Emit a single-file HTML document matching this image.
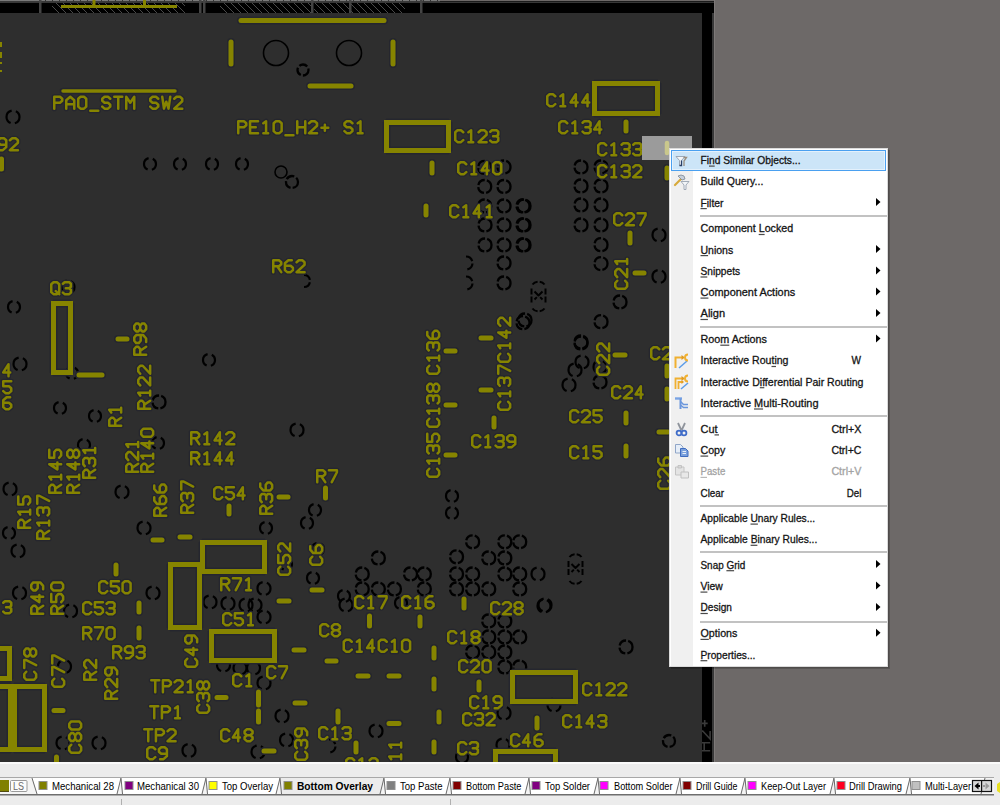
<!DOCTYPE html><html><head><meta charset="utf-8"><style>
*{margin:0;padding:0;box-sizing:border-box}
html,body{width:1000px;height:805px;overflow:hidden;background:#6d6968;font-family:"Liberation Sans",sans-serif}
#top{position:absolute;left:0;top:0;width:712px;height:13px;background:#000}
#board{position:absolute;left:0;top:13px;width:702px;height:749px;background:#2e2e2e}
#frameR{position:absolute;left:702px;top:0;width:10px;height:762px;background:#000}
#frameR2{position:absolute;left:712px;top:0;width:2px;height:762px;background:#383838}
#hlpad{position:absolute;left:642px;top:136px;width:50px;height:24px;background:#9b9b9b}
#menu{position:absolute;left:669px;top:148px;width:219px;height:519px;background:#fff;border:1px solid #c8c8c8;box-shadow:2px 2px 3px rgba(0,0,0,0.35)}
#menu .gutter{position:absolute;left:1px;top:1px;width:23px;bottom:1px;background:#f1f1f1}
#menu .hl{position:absolute;left:1px;width:215px;height:21px;background:#cce4f7;border:1px solid #5aa6f0}
#menu .sep{position:absolute;left:30px;right:0;height:2px;border-top:1px solid #d4d4d4;border-bottom:1px solid #fff}
#menu .mi{position:absolute;left:0;width:217px;height:21px;font-size:11.4px;line-height:13px;color:#000;letter-spacing:-0.2px}
#menu .mi .tx{position:absolute;left:30px;top:1px;white-space:pre}
#menu .mi .sc{position:absolute;right:25px;top:1px;white-space:pre}
#menu .mi.dis{color:#a0a0a0}
#menu .mi .ar{position:absolute;left:206px;top:3px;width:0;height:0;border-left:4px solid #000;border-top:4px solid transparent;border-bottom:4px solid transparent}
#menu u{text-decoration:underline;text-underline-offset:1px}
#bottom{position:absolute;left:0;top:762px;width:1000px;height:43px;background:#ececec}
</style></head><body>
<div id="board"></div>
<svg width="702" height="749" viewBox="0 13 702 749" style="position:absolute;left:0;top:13px">
<g fill="none" stroke="#000" stroke-width="2">
<circle cx="276.0" cy="53.0" r="12.5" stroke-width="1.6"/>
<circle cx="349.0" cy="53.0" r="12.5" stroke-width="1.6"/>
<circle cx="303.0" cy="70.0" r="5.5" stroke-width="2.3" stroke-dasharray="8.5 2.2"/>
<circle cx="150" cy="164" r="6" stroke-width="2.2" stroke-dasharray="7.22 4.4 14.45 4.4 7.22"/>
<circle cx="180" cy="164" r="6" stroke-width="2.2" stroke-dasharray="7.22 4.4 14.45 4.4 7.22"/>
<circle cx="212" cy="164" r="6" stroke-width="2.2" stroke-dasharray="7.22 4.4 14.45 4.4 7.22"/>
<circle cx="242" cy="164" r="6" stroke-width="2.2" stroke-dasharray="7.22 4.4 14.45 4.4 7.22"/>
<circle cx="281" cy="172" r="6" stroke-width="1.6"/>
<circle cx="292" cy="182" r="6" stroke-width="2.3" stroke-dasharray="8.5 2.2"/>
<circle cx="484.7" cy="167.4" r="6.5" stroke-width="2.3" stroke-dasharray="8.5 2.2"/>
<circle cx="504.0" cy="167.0" r="6.5" stroke-width="2.3" stroke-dasharray="8.5 2.2"/>
<circle cx="484.7" cy="186.5" r="6.5" stroke-width="2.3" stroke-dasharray="8.5 2.2"/>
<circle cx="504.0" cy="186.5" r="6.5" stroke-width="2.3" stroke-dasharray="8.5 2.2"/>
<circle cx="484.7" cy="206.0" r="6.5" stroke-width="2.3" stroke-dasharray="8.5 2.2"/>
<circle cx="504.0" cy="206.0" r="6.5" stroke-width="2.3" stroke-dasharray="8.5 2.2"/>
<circle cx="523.0" cy="206.0" r="6.5" stroke-width="2.3" stroke-dasharray="8.5 2.2"/>
<circle cx="485.0" cy="225.0" r="6.5" stroke-width="2.3" stroke-dasharray="8.5 2.2"/>
<circle cx="504.0" cy="225.0" r="6.5" stroke-width="2.3" stroke-dasharray="8.5 2.2"/>
<circle cx="523.0" cy="225.0" r="6.5" stroke-width="2.3" stroke-dasharray="8.5 2.2"/>
<circle cx="485.0" cy="245.0" r="6.5" stroke-width="2.3" stroke-dasharray="8.5 2.2"/>
<circle cx="504.0" cy="245.0" r="6.5" stroke-width="2.3" stroke-dasharray="8.5 2.2"/>
<circle cx="523.0" cy="245.0" r="6.5" stroke-width="2.3" stroke-dasharray="8.5 2.2"/>
<path d="M466,256.5 A6.5,6.5 0 0 1 466,269.5" stroke-width="2.2" stroke-dasharray="8 2.5"/>
<circle cx="504.0" cy="263.0" r="6.5" stroke-width="2.3" stroke-dasharray="8.5 2.2"/>
<path d="M466,276.5 A6.5,6.5 0 0 1 466,289.5" stroke-width="2.2" stroke-dasharray="8 2.5"/>
<circle cx="504.0" cy="283.0" r="6.5" stroke-width="2.3" stroke-dasharray="8.5 2.2"/>
<circle cx="523.0" cy="322.7" r="6.5" stroke-width="2.3" stroke-dasharray="8.5 2.2"/>
<circle cx="581.0" cy="167.0" r="6.5" stroke-width="2.3" stroke-dasharray="8.5 2.2"/>
<circle cx="601.0" cy="167.0" r="6.5" stroke-width="2.3" stroke-dasharray="8.5 2.2"/>
<circle cx="581.0" cy="186.0" r="6.5" stroke-width="2.3" stroke-dasharray="8.5 2.2"/>
<circle cx="601.0" cy="186.0" r="6.5" stroke-width="2.3" stroke-dasharray="8.5 2.2"/>
<circle cx="581.0" cy="205.0" r="6.5" stroke-width="2.3" stroke-dasharray="8.5 2.2"/>
<circle cx="601.0" cy="205.0" r="6.5" stroke-width="2.3" stroke-dasharray="8.5 2.2"/>
<circle cx="581.0" cy="225.0" r="6.5" stroke-width="2.3" stroke-dasharray="8.5 2.2"/>
<circle cx="601.0" cy="225.0" r="6.5" stroke-width="2.3" stroke-dasharray="8.5 2.2"/>
<circle cx="601.0" cy="244.7" r="6.5" stroke-width="2.3" stroke-dasharray="8.5 2.2"/>
<circle cx="601.0" cy="263.6" r="6.5" stroke-width="2.3" stroke-dasharray="8.5 2.2"/>
<circle cx="620.0" cy="302.0" r="6.5" stroke-width="2.3" stroke-dasharray="8.5 2.2"/>
<circle cx="601.0" cy="321.7" r="6.5" stroke-width="2.3" stroke-dasharray="8.5 2.2"/>
<circle cx="581.0" cy="343.0" r="6.5" stroke-width="2.3" stroke-dasharray="8.5 2.2"/>
<circle cx="524.0" cy="206.0" r="6.5" stroke-width="2.3" stroke-dasharray="8.5 2.2"/>
<circle cx="524.0" cy="225.0" r="6.5" stroke-width="2.3" stroke-dasharray="8.5 2.2"/>
<circle cx="524.0" cy="245.0" r="6.5" stroke-width="2.3" stroke-dasharray="8.5 2.2"/>
<circle cx="525.0" cy="320.0" r="6.5" stroke-width="2.3" stroke-dasharray="8.5 2.2"/>
<circle cx="659.0" cy="235.0" r="6.5" stroke-width="2.2" stroke-dasharray="8.01 4.4 16.02 4.4 8.01"/>
<circle cx="659.0" cy="276.5" r="6.5" stroke-width="2.2" stroke-dasharray="8.01 4.4 16.02 4.4 8.01"/>
<circle cx="472.6" cy="541.8" r="6.5" stroke-width="2.3" stroke-dasharray="8.5 2.2"/>
<circle cx="504.8" cy="541.8" r="6.5" stroke-width="2.3" stroke-dasharray="8.5 2.2"/>
<circle cx="519.7" cy="541.8" r="6.5" stroke-width="2.3" stroke-dasharray="8.5 2.2"/>
<circle cx="378.3" cy="558.0" r="6.5" stroke-width="2.3" stroke-dasharray="8.5 2.2"/>
<circle cx="456.5" cy="556.8" r="6.5" stroke-width="2.3" stroke-dasharray="8.5 2.2"/>
<circle cx="488.7" cy="558.0" r="6.5" stroke-width="2.3" stroke-dasharray="8.5 2.2"/>
<circle cx="504.8" cy="558.0" r="6.5" stroke-width="2.3" stroke-dasharray="8.5 2.2"/>
<circle cx="362.2" cy="574.0" r="6.5" stroke-width="2.3" stroke-dasharray="8.5 2.2"/>
<circle cx="410.5" cy="574.0" r="6.5" stroke-width="2.3" stroke-dasharray="8.5 2.2"/>
<circle cx="424.3" cy="574.0" r="6.5" stroke-width="2.3" stroke-dasharray="8.5 2.2"/>
<circle cx="456.5" cy="574.0" r="6.5" stroke-width="2.3" stroke-dasharray="8.5 2.2"/>
<circle cx="472.6" cy="574.0" r="6.5" stroke-width="2.3" stroke-dasharray="8.5 2.2"/>
<circle cx="504.8" cy="574.0" r="6.5" stroke-width="2.3" stroke-dasharray="8.5 2.2"/>
<circle cx="519.7" cy="574.0" r="6.5" stroke-width="2.3" stroke-dasharray="8.5 2.2"/>
<circle cx="362.2" cy="589.0" r="6.5" stroke-width="2.3" stroke-dasharray="8.5 2.2"/>
<circle cx="378.3" cy="589.0" r="6.5" stroke-width="2.3" stroke-dasharray="8.5 2.2"/>
<circle cx="394.4" cy="589.0" r="6.5" stroke-width="2.3" stroke-dasharray="8.5 2.2"/>
<circle cx="424.3" cy="589.0" r="6.5" stroke-width="2.3" stroke-dasharray="8.5 2.2"/>
<circle cx="456.5" cy="589.0" r="6.5" stroke-width="2.3" stroke-dasharray="8.5 2.2"/>
<circle cx="472.6" cy="589.0" r="6.5" stroke-width="2.3" stroke-dasharray="8.5 2.2"/>
<circle cx="488.7" cy="589.0" r="6.5" stroke-width="2.3" stroke-dasharray="8.5 2.2"/>
<circle cx="519.7" cy="589.0" r="6.5" stroke-width="2.3" stroke-dasharray="8.5 2.2"/>
<circle cx="346.0" cy="605.0" r="6.5" stroke-width="2.2" stroke-dasharray="8.01 4.4 16.02 4.4 8.01"/>
<circle cx="488.7" cy="621.0" r="6.5" stroke-width="2.3" stroke-dasharray="8.5 2.2"/>
<circle cx="504.8" cy="621.0" r="6.5" stroke-width="2.3" stroke-dasharray="8.5 2.2"/>
<circle cx="488.7" cy="637.0" r="6.5" stroke-width="2.3" stroke-dasharray="8.5 2.2"/>
<circle cx="504.8" cy="637.0" r="6.5" stroke-width="2.3" stroke-dasharray="8.5 2.2"/>
<circle cx="519.7" cy="637.0" r="6.5" stroke-width="2.3" stroke-dasharray="8.5 2.2"/>
<circle cx="472.6" cy="652.0" r="6.5" stroke-width="2.3" stroke-dasharray="8.5 2.2"/>
<circle cx="488.7" cy="652.0" r="6.5" stroke-width="2.3" stroke-dasharray="8.5 2.2"/>
<circle cx="504.8" cy="652.0" r="6.5" stroke-width="2.3" stroke-dasharray="8.5 2.2"/>
<circle cx="504.8" cy="667.0" r="6.5" stroke-width="2.3" stroke-dasharray="8.5 2.2"/>
<circle cx="519.7" cy="667.0" r="6.5" stroke-width="2.3" stroke-dasharray="8.5 2.2"/>
<circle cx="544.0" cy="606.0" r="6.5" stroke-width="2.2" stroke-dasharray="8.01 4.4 16.02 4.4 8.01"/>
<circle cx="626.0" cy="647.0" r="6.5" stroke-width="2.3" stroke-dasharray="8.5 2.2"/>
<circle cx="581.0" cy="342.0" r="6.5" stroke-width="2.3" stroke-dasharray="8.5 2.2"/>
<circle cx="582.0" cy="362.0" r="6.5" stroke-width="2.2" stroke-dasharray="8.01 4.4 16.02 4.4 8.01"/>
<circle cx="575.0" cy="370.0" r="6.5" stroke-width="2.2" stroke-dasharray="8.01 4.4 16.02 4.4 8.01"/>
<circle cx="569.0" cy="385.0" r="6.5" stroke-width="2.2" stroke-dasharray="8.01 4.4 16.02 4.4 8.01"/>
<circle cx="600.0" cy="382.0" r="6.5" stroke-width="2.3" stroke-dasharray="8.5 2.2"/>
<circle cx="600.0" cy="367.0" r="6.5" stroke-width="2.2" stroke-dasharray="8.01 4.4 16.02 4.4 8.01"/>
<circle cx="538.0" cy="574.0" r="6.5" stroke-width="2.2" stroke-dasharray="8.01 4.4 16.02 4.4 8.01"/>
<circle cx="545.0" cy="605.0" r="6.5" stroke-width="2.2" stroke-dasharray="8.01 4.4 16.02 4.4 8.01"/>
<circle cx="554.0" cy="705.0" r="6.5" stroke-width="2.2" stroke-dasharray="8.01 4.4 16.02 4.4 8.01"/>
<circle cx="504.0" cy="713.0" r="6.5" stroke-width="2.2" stroke-dasharray="8.01 4.4 16.02 4.4 8.01"/>
<circle cx="462.0" cy="757.0" r="6.0" stroke-width="2.2" stroke-dasharray="7.22 4.4 14.45 4.4 7.22"/>
<circle cx="503.0" cy="745.0" r="6.5" stroke-width="2.2" stroke-dasharray="8.01 4.4 16.02 4.4 8.01"/>
<circle cx="14.0" cy="307.0" r="6.0" stroke-width="2.2" stroke-dasharray="7.22 4.4 14.45 4.4 7.22"/>
<circle cx="20" cy="364" r="6.5" stroke-width="2.2" stroke-dasharray="8.01 4.4 16.02 4.4 8.01"/>
<circle cx="68.0" cy="287.0" r="6.5" stroke-width="2.2" stroke-dasharray="8.01 4.4 16.02 4.4 8.01"/>
<circle cx="13.0" cy="117.0" r="6.5" stroke-width="2.2" stroke-dasharray="8.01 4.4 16.02 4.4 8.01"/>
<circle cx="159.0" cy="402.0" r="6.5" stroke-width="2.3" stroke-dasharray="8.5 2.2"/>
<circle cx="209.0" cy="360.0" r="6.0" stroke-width="2.2" stroke-dasharray="7.22 4.4 14.45 4.4 7.22"/>
<circle cx="297.0" cy="430.0" r="6.5" stroke-width="2.2" stroke-dasharray="8.01 4.4 16.02 4.4 8.01"/>
<path d="M304,275 A6,6 0 0 1 304,287" stroke-width="2.2" stroke-dasharray="8 2.5"/>
<circle cx="122.0" cy="492.0" r="6.5" stroke-width="2.2" stroke-dasharray="8.01 4.4 16.02 4.4 8.01"/>
<circle cx="72.0" cy="373.0" r="6.0" stroke-width="2.2" stroke-dasharray="7.22 4.4 14.45 4.4 7.22"/>
<circle cx="60.0" cy="408.0" r="6.0" stroke-width="2.2" stroke-dasharray="7.22 4.4 14.45 4.4 7.22"/>
<circle cx="95.0" cy="416.0" r="6.0" stroke-width="2.2" stroke-dasharray="7.22 4.4 14.45 4.4 7.22"/>
<circle cx="84.0" cy="445.0" r="6.0" stroke-width="2.2" stroke-dasharray="7.22 4.4 14.45 4.4 7.22"/>
<circle cx="158.0" cy="443.0" r="6.0" stroke-width="2.2" stroke-dasharray="7.22 4.4 14.45 4.4 7.22"/>
<circle cx="10.0" cy="489.0" r="6.5" stroke-width="2.2" stroke-dasharray="8.01 4.4 16.02 4.4 8.01"/>
<circle cx="144.0" cy="528.0" r="6.5" stroke-width="2.2" stroke-dasharray="8.01 4.4 16.02 4.4 8.01"/>
<circle cx="9.0" cy="533.0" r="6.0" stroke-width="2.2" stroke-dasharray="7.22 4.4 14.45 4.4 7.22"/>
<circle cx="266.0" cy="528.0" r="6.0" stroke-width="2.2" stroke-dasharray="7.22 4.4 14.45 4.4 7.22"/>
<circle cx="307.0" cy="523.0" r="6.0" stroke-width="2.2" stroke-dasharray="7.22 4.4 14.45 4.4 7.22"/>
<circle cx="318.0" cy="549.0" r="6.0" stroke-width="2.2" stroke-dasharray="7.22 4.4 14.45 4.4 7.22"/>
<circle cx="313.0" cy="578.0" r="6.0" stroke-width="2.2" stroke-dasharray="7.22 4.4 14.45 4.4 7.22"/>
<circle cx="315.0" cy="510.0" r="6.0" stroke-width="2.2" stroke-dasharray="7.22 4.4 14.45 4.4 7.22"/>
<circle cx="344.0" cy="596.0" r="6.0" stroke-width="2.2" stroke-dasharray="7.22 4.4 14.45 4.4 7.22"/>
<circle cx="452.0" cy="496.0" r="6.0" stroke-width="2.2" stroke-dasharray="7.22 4.4 14.45 4.4 7.22"/>
<circle cx="452.0" cy="513.0" r="6.0" stroke-width="2.2" stroke-dasharray="7.22 4.4 14.45 4.4 7.22"/>
<circle cx="376" cy="731" r="6.5" stroke-width="2.2" stroke-dasharray="8.01 4.4 16.02 4.4 8.01"/>
<path d="M329,739.5 A6.5,6.5 0 0 1 329,752.5" stroke-width="2.2" stroke-dasharray="8 2.5"/>
<circle cx="401.0" cy="603.0" r="6.0" stroke-width="2.2" stroke-dasharray="7.22 4.4 14.45 4.4 7.22"/>
<circle cx="669.0" cy="741.0" r="6.0" stroke-width="2.3" stroke-dasharray="8.5 2.2"/>
<circle cx="286.0" cy="564.0" r="6.0" stroke-width="2.2" stroke-dasharray="7.22 4.4 14.45 4.4 7.22"/>
<circle cx="210" cy="602" r="6.5" stroke-width="2.2" stroke-dasharray="8.01 4.4 16.02 4.4 8.01"/>
<circle cx="228" cy="603.5" r="6.5" stroke-width="2.2" stroke-dasharray="8.01 4.4 16.02 4.4 8.01"/>
<circle cx="246" cy="605" r="6.5" stroke-width="2.2" stroke-dasharray="8.01 4.4 16.02 4.4 8.01"/>
<circle cx="264" cy="588.5" r="6.5" stroke-width="2.2" stroke-dasharray="8.01 4.4 16.02 4.4 8.01"/>
<circle cx="255" cy="605" r="6.5" stroke-width="2.2" stroke-dasharray="8.01 4.4 16.02 4.4 8.01"/>
<circle cx="264" cy="617" r="6.5" stroke-width="2.2" stroke-dasharray="8.01 4.4 16.02 4.4 8.01"/>
<circle cx="223.5" cy="665" r="6.5" stroke-width="2.2" stroke-dasharray="8.01 4.4 16.02 4.4 8.01"/>
<circle cx="240" cy="668" r="6.5" stroke-width="2.2" stroke-dasharray="8.01 4.4 16.02 4.4 8.01"/>
<circle cx="253.5" cy="668" r="6.5" stroke-width="2.2" stroke-dasharray="8.01 4.4 16.02 4.4 8.01"/>
<circle cx="264" cy="683" r="6.5" stroke-width="2.2" stroke-dasharray="8.01 4.4 16.02 4.4 8.01"/>
<circle cx="282" cy="716" r="6.5" stroke-width="2.2" stroke-dasharray="8.01 4.4 16.02 4.4 8.01"/>
<circle cx="286.5" cy="740" r="6.5" stroke-width="2.2" stroke-dasharray="8.01 4.4 16.02 4.4 8.01"/>
<circle cx="99" cy="743" r="6.5" stroke-width="2.2" stroke-dasharray="8.01 4.4 16.02 4.4 8.01"/>
<circle cx="63" cy="743" r="6.5" stroke-width="2.2" stroke-dasharray="8.01 4.4 16.02 4.4 8.01"/>
<circle cx="153" cy="593" r="6.5" stroke-width="2.2" stroke-dasharray="8.01 4.4 16.02 4.4 8.01"/>
<circle cx="70.5" cy="611" r="6.5" stroke-width="2.2" stroke-dasharray="8.01 4.4 16.02 4.4 8.01"/>
<circle cx="18" cy="551" r="6.5" stroke-width="2.2" stroke-dasharray="8.01 4.4 16.02 4.4 8.01"/>
<circle cx="19.5" cy="593" r="6.5" stroke-width="2.2" stroke-dasharray="8.01 4.4 16.02 4.4 8.01"/>
<circle cx="64.5" cy="666.5" r="6.5" stroke-width="2.2" stroke-dasharray="8.01 4.4 16.02 4.4 8.01"/>
<circle cx="189" cy="750.5" r="6.5" stroke-width="2.2" stroke-dasharray="8.01 4.4 16.02 4.4 8.01"/>
<circle cx="258" cy="752" r="6.5" stroke-width="2.2" stroke-dasharray="8.01 4.4 16.02 4.4 8.01"/>
<path d="M569.5,557 A7,6 0 0 1 581.5,557 M569.5,581 A7,6 0 0 0 581.5,581 M568.5,561 L568.5,577 M582.5,561 L582.5,577 M571.5,564 L579.5,572 M579.5,564 L571.5,572" stroke-dasharray="6 2"/>
<path d="M532.5,284.5 A7,6 0 0 1 544.5,284.5 M532.5,308.5 A7,6 0 0 0 544.5,308.5 M531.5,288.5 L531.5,304.5 M545.5,288.5 L545.5,304.5 M534.5,291.5 L542.5,299.5 M542.5,291.5 L534.5,299.5" stroke-dasharray="6 2"/>
</g>
<g fill="none" stroke-linecap="round" stroke-linejoin="round">
<path d="M 54.25,108.65 L 54.25,96.75 L 59.96,96.75 L 62.25,98.73 L 62.25,100.72 L 59.96,102.70 L 54.25,102.70 M 66.25,108.65 L 66.25,100.22 L 70.25,96.75 L 74.25,100.22 L 74.25,108.65 M 66.25,104.19 L 74.25,104.19 M 80.54,96.75 L 83.96,96.75 L 86.25,98.73 L 86.25,106.67 L 83.96,108.65 L 80.54,108.65 L 78.25,106.67 L 78.25,98.73 Z M 90.25,110.63 L 98.25,110.63 M 110.25,98.73 L 107.96,96.75 L 104.54,96.75 L 102.25,98.73 L 102.25,100.72 L 104.54,102.70 L 107.96,102.70 L 110.25,104.68 L 110.25,106.67 L 107.96,108.65 L 104.54,108.65 L 102.25,106.67 M 114.25,96.75 L 122.25,96.75 M 118.25,96.75 L 118.25,108.65 M 126.25,108.65 L 126.25,96.75 L 130.25,102.70 L 134.25,96.75 L 134.25,108.65 M 158.25,98.73 L 155.96,96.75 L 152.54,96.75 L 150.25,98.73 L 150.25,100.72 L 152.54,102.70 L 155.96,102.70 L 158.25,104.68 L 158.25,106.67 L 155.96,108.65 L 152.54,108.65 L 150.25,106.67 M 162.25,96.75 L 163.96,108.65 L 166.25,101.71 L 168.54,108.65 L 170.25,96.75 M 174.25,98.73 L 176.54,96.75 L 179.96,96.75 L 182.25,98.73 L 182.25,101.21 L 174.25,108.65 L 182.25,108.65 M 6.25,144.70 L 0.54,144.70 L -1.75,142.71 L -1.75,140.23 L 0.54,138.25 L 3.96,138.25 L 6.25,140.23 L 6.25,147.18 L 2.82,150.15 L -0.61,150.15 M 9.92,140.23 L 12.21,138.25 L 15.63,138.25 L 17.92,140.23 L 17.92,142.71 L 9.92,150.15 L 17.92,150.15 M 238.25,133.15 L 238.25,121.25 L 243.96,121.25 L 246.25,123.23 L 246.25,125.22 L 243.96,127.20 L 238.25,127.20 M 258.05,121.25 L 250.05,121.25 L 250.05,133.15 L 258.05,133.15 M 250.05,127.20 L 255.76,127.20 M 263.34,123.23 L 266.08,121.25 L 266.08,133.15 M 263.34,133.15 L 268.14,133.15 M 275.94,121.25 L 279.36,121.25 L 281.65,123.23 L 281.65,131.17 L 279.36,133.15 L 275.94,133.15 L 273.65,131.17 L 273.65,123.23 Z M 285.45,135.13 L 293.45,135.13 M 297.25,121.25 L 297.25,133.15 M 305.25,121.25 L 305.25,133.15 M 297.25,127.20 L 305.25,127.20 M 309.05,123.23 L 311.34,121.25 L 314.76,121.25 L 317.05,123.23 L 317.05,125.71 L 309.05,133.15 L 317.05,133.15 M 321.42,127.70 L 328.28,127.70 M 324.85,124.72 L 324.85,130.67 M 352.45,123.23 L 350.16,121.25 L 346.74,121.25 L 344.45,123.23 L 344.45,125.22 L 346.74,127.20 L 350.16,127.20 L 352.45,129.18 L 352.45,131.17 L 350.16,133.15 L 346.74,133.15 L 344.45,131.17 M 357.74,123.23 L 360.48,121.25 L 360.48,133.15 M 357.74,133.15 L 362.54,133.15 M 463.25,132.23 L 460.96,130.25 L 457.54,130.25 L 455.25,132.23 L 455.25,140.17 L 457.54,142.15 L 460.96,142.15 L 463.25,140.17 M 468.41,132.23 L 471.15,130.25 L 471.15,142.15 M 468.41,142.15 L 473.21,142.15 M 478.59,132.23 L 480.88,130.25 L 484.30,130.25 L 486.59,132.23 L 486.59,134.71 L 478.59,142.15 L 486.59,142.15 M 490.26,131.74 L 491.97,130.25 L 496.55,130.25 L 498.26,131.74 L 498.26,134.71 L 496.55,136.20 L 493.12,136.20 M 496.55,136.20 L 498.26,137.69 L 498.26,140.66 L 496.55,142.15 L 491.97,142.15 L 490.26,140.66 M 466.25,164.23 L 463.96,162.25 L 460.54,162.25 L 458.25,164.23 L 458.25,172.17 L 460.54,174.15 L 463.96,174.15 L 466.25,172.17 M 471.41,164.23 L 474.15,162.25 L 474.15,174.15 M 471.41,174.15 L 476.21,174.15 M 486.85,174.15 L 486.85,162.25 L 481.59,170.38 L 488.56,170.38 M 495.55,162.25 L 498.97,162.25 L 501.26,164.23 L 501.26,172.17 L 498.97,174.15 L 495.55,174.15 L 493.26,172.17 L 493.26,164.23 Z M 458.25,207.23 L 455.96,205.25 L 452.54,205.25 L 450.25,207.23 L 450.25,215.17 L 452.54,217.15 L 455.96,217.15 L 458.25,215.17 M 463.41,207.23 L 466.15,205.25 L 466.15,217.15 M 463.41,217.15 L 468.21,217.15 M 478.85,217.15 L 478.85,205.25 L 473.59,213.38 L 480.56,213.38 M 486.75,207.23 L 489.49,205.25 L 489.49,217.15 M 486.75,217.15 L 491.55,217.15 M 273.25,272.15 L 273.25,260.25 L 278.96,260.25 L 281.25,262.23 L 281.25,264.22 L 278.96,266.20 L 273.25,266.20 M 277.25,266.20 L 281.25,272.15 M 291.78,260.25 L 288.35,260.25 L 284.92,263.23 L 284.92,270.17 L 287.21,272.15 L 290.63,272.15 L 292.92,270.17 L 292.92,267.69 L 290.63,265.70 L 284.92,265.70 M 296.59,262.23 L 298.88,260.25 L 302.30,260.25 L 304.59,262.23 L 304.59,264.71 L 296.59,272.15 L 304.59,272.15 M 555.25,96.23 L 552.96,94.25 L 549.54,94.25 L 547.25,96.23 L 547.25,104.17 L 549.54,106.15 L 552.96,106.15 L 555.25,104.17 M 560.41,96.23 L 563.15,94.25 L 563.15,106.15 M 560.41,106.15 L 565.21,106.15 M 575.85,106.15 L 575.85,94.25 L 570.59,102.38 L 577.56,102.38 M 587.52,106.15 L 587.52,94.25 L 582.26,102.38 L 589.23,102.38 M 567.25,123.23 L 564.96,121.25 L 561.54,121.25 L 559.25,123.23 L 559.25,131.17 L 561.54,133.15 L 564.96,133.15 L 567.25,131.17 M 572.41,123.23 L 575.15,121.25 L 575.15,133.15 M 572.41,133.15 L 577.21,133.15 M 582.59,122.74 L 584.30,121.25 L 588.88,121.25 L 590.59,122.74 L 590.59,125.71 L 588.88,127.20 L 585.45,127.20 M 588.88,127.20 L 590.59,128.69 L 590.59,131.66 L 588.88,133.15 L 584.30,133.15 L 582.59,131.66 M 599.52,133.15 L 599.52,121.25 L 594.26,129.38 L 601.23,129.38 M 606.25,145.23 L 603.96,143.25 L 600.54,143.25 L 598.25,145.23 L 598.25,153.17 L 600.54,155.15 L 603.96,155.15 L 606.25,153.17 M 611.41,145.23 L 614.15,143.25 L 614.15,155.15 M 611.41,155.15 L 616.21,155.15 M 621.59,144.74 L 623.30,143.25 L 627.88,143.25 L 629.59,144.74 L 629.59,147.71 L 627.88,149.20 L 624.45,149.20 M 627.88,149.20 L 629.59,150.69 L 629.59,153.66 L 627.88,155.15 L 623.30,155.15 L 621.59,153.66 M 633.26,144.74 L 634.97,143.25 L 639.55,143.25 L 641.26,144.74 L 641.26,147.71 L 639.55,149.20 L 636.12,149.20 M 639.55,149.20 L 641.26,150.69 L 641.26,153.66 L 639.55,155.15 L 634.97,155.15 L 633.26,153.66 M 606.25,167.23 L 603.96,165.25 L 600.54,165.25 L 598.25,167.23 L 598.25,175.17 L 600.54,177.15 L 603.96,177.15 L 606.25,175.17 M 611.41,167.23 L 614.15,165.25 L 614.15,177.15 M 611.41,177.15 L 616.21,177.15 M 621.59,166.74 L 623.30,165.25 L 627.88,165.25 L 629.59,166.74 L 629.59,169.71 L 627.88,171.20 L 624.45,171.20 M 627.88,171.20 L 629.59,172.69 L 629.59,175.66 L 627.88,177.15 L 623.30,177.15 L 621.59,175.66 M 633.26,167.23 L 635.55,165.25 L 638.97,165.25 L 641.26,167.23 L 641.26,169.71 L 633.26,177.15 L 641.26,177.15 M 622.25,215.23 L 619.96,213.25 L 616.54,213.25 L 614.25,215.23 L 614.25,223.17 L 616.54,225.15 L 619.96,225.15 L 622.25,223.17 M 625.92,215.23 L 628.21,213.25 L 631.63,213.25 L 633.92,215.23 L 633.92,217.71 L 625.92,225.15 L 633.92,225.15 M 637.59,213.25 L 645.59,213.25 L 645.59,215.23 L 640.45,225.15 M 53.54,282.25 L 56.96,282.25 L 59.25,284.23 L 59.25,292.17 L 56.96,294.15 L 53.54,294.15 L 51.25,292.17 L 51.25,284.23 Z M 55.82,291.18 L 59.25,294.15 M 62.92,283.74 L 64.63,282.25 L 69.21,282.25 L 70.92,283.74 L 70.92,286.71 L 69.21,288.20 L 65.78,288.20 M 69.21,288.20 L 70.92,289.69 L 70.92,292.66 L 69.21,294.15 L 64.63,294.15 L 62.92,292.66 M 191.25,444.15 L 191.25,432.25 L 196.96,432.25 L 199.25,434.23 L 199.25,436.22 L 196.96,438.20 L 191.25,438.20 M 195.25,438.20 L 199.25,444.15 M 204.41,434.23 L 207.15,432.25 L 207.15,444.15 M 204.41,444.15 L 209.21,444.15 M 219.85,444.15 L 219.85,432.25 L 214.59,440.38 L 221.56,440.38 M 226.26,434.23 L 228.55,432.25 L 231.97,432.25 L 234.26,434.23 L 234.26,436.71 L 226.26,444.15 L 234.26,444.15 M 191.25,464.15 L 191.25,452.25 L 196.96,452.25 L 199.25,454.23 L 199.25,456.22 L 196.96,458.20 L 191.25,458.20 M 195.25,458.20 L 199.25,464.15 M 204.41,454.23 L 207.15,452.25 L 207.15,464.15 M 204.41,464.15 L 209.21,464.15 M 219.85,464.15 L 219.85,452.25 L 214.59,460.38 L 221.56,460.38 M 231.52,464.15 L 231.52,452.25 L 226.26,460.38 L 233.23,460.38 M 222.25,489.23 L 219.96,487.25 L 216.54,487.25 L 214.25,489.23 L 214.25,497.17 L 216.54,499.15 L 219.96,499.15 L 222.25,497.17 M 233.92,487.25 L 225.92,487.25 L 225.92,492.21 L 231.63,492.21 L 233.92,494.19 L 233.92,497.17 L 231.63,499.15 L 228.21,499.15 L 225.92,497.17 M 242.85,499.15 L 242.85,487.25 L 237.59,495.38 L 244.56,495.38 M 317.25,482.15 L 317.25,470.25 L 322.96,470.25 L 325.25,472.23 L 325.25,474.22 L 322.96,476.20 L 317.25,476.20 M 321.25,476.20 L 325.25,482.15 M 328.92,470.25 L 336.92,470.25 L 336.92,472.23 L 331.78,482.15 M 107.25,583.23 L 104.96,581.25 L 101.54,581.25 L 99.25,583.23 L 99.25,591.17 L 101.54,593.15 L 104.96,593.15 L 107.25,591.17 M 118.92,581.25 L 110.92,581.25 L 110.92,586.21 L 116.63,586.21 L 118.92,588.19 L 118.92,591.17 L 116.63,593.15 L 113.21,593.15 L 110.92,591.17 M 124.88,581.25 L 128.30,581.25 L 130.59,583.23 L 130.59,591.17 L 128.30,593.15 L 124.88,593.15 L 122.59,591.17 L 122.59,583.23 Z M 91.25,604.23 L 88.96,602.25 L 85.54,602.25 L 83.25,604.23 L 83.25,612.17 L 85.54,614.15 L 88.96,614.15 L 91.25,612.17 M 102.92,602.25 L 94.92,602.25 L 94.92,607.21 L 100.63,607.21 L 102.92,609.19 L 102.92,612.17 L 100.63,614.15 L 97.21,614.15 L 94.92,612.17 M 106.59,603.74 L 108.30,602.25 L 112.88,602.25 L 114.59,603.74 L 114.59,606.71 L 112.88,608.20 L 109.45,608.20 M 112.88,608.20 L 114.59,609.69 L 114.59,612.66 L 112.88,614.15 L 108.30,614.15 L 106.59,612.66 M 3.25,602.74 L 4.96,601.25 L 9.54,601.25 L 11.25,602.74 L 11.25,605.71 L 9.54,607.20 L 6.11,607.20 M 9.54,607.20 L 11.25,608.69 L 11.25,611.66 L 9.54,613.15 L 4.96,613.15 L 3.25,611.66 M 83.25,639.15 L 83.25,627.25 L 88.96,627.25 L 91.25,629.23 L 91.25,631.22 L 88.96,633.20 L 83.25,633.20 M 87.25,633.20 L 91.25,639.15 M 94.92,627.25 L 102.92,627.25 L 102.92,629.23 L 97.78,639.15 M 108.88,627.25 L 112.30,627.25 L 114.59,629.23 L 114.59,637.17 L 112.30,639.15 L 108.88,639.15 L 106.59,637.17 L 106.59,629.23 Z M 113.25,658.15 L 113.25,646.25 L 118.96,646.25 L 121.25,648.23 L 121.25,650.22 L 118.96,652.20 L 113.25,652.20 M 117.25,652.20 L 121.25,658.15 M 132.92,652.70 L 127.21,652.70 L 124.92,650.71 L 124.92,648.23 L 127.21,646.25 L 130.63,646.25 L 132.92,648.23 L 132.92,655.17 L 129.49,658.15 L 126.06,658.15 M 136.59,647.74 L 138.30,646.25 L 142.88,646.25 L 144.59,647.74 L 144.59,650.71 L 142.88,652.20 L 139.45,652.20 M 142.88,652.20 L 144.59,653.69 L 144.59,656.66 L 142.88,658.15 L 138.30,658.15 L 136.59,656.66 M 221.25,590.15 L 221.25,578.25 L 226.96,578.25 L 229.25,580.23 L 229.25,582.22 L 226.96,584.20 L 221.25,584.20 M 225.25,584.20 L 229.25,590.15 M 232.92,578.25 L 240.92,578.25 L 240.92,580.23 L 235.78,590.15 M 246.08,580.23 L 248.82,578.25 L 248.82,590.15 M 246.08,590.15 L 250.88,590.15 M 231.25,615.23 L 228.96,613.25 L 225.54,613.25 L 223.25,615.23 L 223.25,623.17 L 225.54,625.15 L 228.96,625.15 L 231.25,623.17 M 242.92,613.25 L 234.92,613.25 L 234.92,618.21 L 240.63,618.21 L 242.92,620.19 L 242.92,623.17 L 240.63,625.15 L 237.21,625.15 L 234.92,623.17 M 248.08,615.23 L 250.82,613.25 L 250.82,625.15 M 248.08,625.15 L 252.88,625.15 M 480.25,437.23 L 477.96,435.25 L 474.54,435.25 L 472.25,437.23 L 472.25,445.17 L 474.54,447.15 L 477.96,447.15 L 480.25,445.17 M 485.41,437.23 L 488.15,435.25 L 488.15,447.15 M 485.41,447.15 L 490.21,447.15 M 495.59,436.74 L 497.30,435.25 L 501.88,435.25 L 503.59,436.74 L 503.59,439.71 L 501.88,441.20 L 498.45,441.20 M 501.88,441.20 L 503.59,442.69 L 503.59,445.66 L 501.88,447.15 L 497.30,447.15 L 495.59,445.66 M 515.26,441.70 L 509.55,441.70 L 507.26,439.71 L 507.26,437.23 L 509.55,435.25 L 512.97,435.25 L 515.26,437.23 L 515.26,444.18 L 511.83,447.15 L 508.40,447.15 M 659.25,349.23 L 656.96,347.25 L 653.54,347.25 L 651.25,349.23 L 651.25,357.17 L 653.54,359.15 L 656.96,359.15 L 659.25,357.17 M 662.92,349.23 L 665.21,347.25 L 668.63,347.25 L 670.92,349.23 L 670.92,351.71 L 662.92,359.15 L 670.92,359.15 M 674.59,348.74 L 676.30,347.25 L 680.88,347.25 L 682.59,348.74 L 682.59,351.71 L 680.88,353.20 L 677.45,353.20 M 680.88,353.20 L 682.59,354.69 L 682.59,357.66 L 680.88,359.15 L 676.30,359.15 L 674.59,357.66 M 620.25,388.23 L 617.96,386.25 L 614.54,386.25 L 612.25,388.23 L 612.25,396.17 L 614.54,398.15 L 617.96,398.15 L 620.25,396.17 M 623.92,388.23 L 626.21,386.25 L 629.63,386.25 L 631.92,388.23 L 631.92,390.71 L 623.92,398.15 L 631.92,398.15 M 640.85,398.15 L 640.85,386.25 L 635.59,394.38 L 642.56,394.38 M 578.25,412.23 L 575.96,410.25 L 572.54,410.25 L 570.25,412.23 L 570.25,420.17 L 572.54,422.15 L 575.96,422.15 L 578.25,420.17 M 581.92,412.23 L 584.21,410.25 L 587.63,410.25 L 589.92,412.23 L 589.92,414.71 L 581.92,422.15 L 589.92,422.15 M 601.59,410.25 L 593.59,410.25 L 593.59,415.21 L 599.30,415.21 L 601.59,417.19 L 601.59,420.17 L 599.30,422.15 L 595.88,422.15 L 593.59,420.17 M 578.25,448.23 L 575.96,446.25 L 572.54,446.25 L 570.25,448.23 L 570.25,456.17 L 572.54,458.15 L 575.96,458.15 L 578.25,456.17 M 583.41,448.23 L 586.15,446.25 L 586.15,458.15 M 583.41,458.15 L 588.21,458.15 M 601.59,446.25 L 593.59,446.25 L 593.59,451.21 L 599.30,451.21 L 601.59,453.19 L 601.59,456.17 L 599.30,458.15 L 595.88,458.15 L 593.59,456.17 M 363.25,598.23 L 360.96,596.25 L 357.54,596.25 L 355.25,598.23 L 355.25,606.17 L 357.54,608.15 L 360.96,608.15 L 363.25,606.17 M 368.41,598.23 L 371.15,596.25 L 371.15,608.15 M 368.41,608.15 L 373.21,608.15 M 378.59,596.25 L 386.59,596.25 L 386.59,598.23 L 381.45,608.15 M 410.25,598.23 L 407.96,596.25 L 404.54,596.25 L 402.25,598.23 L 402.25,606.17 L 404.54,608.15 L 407.96,608.15 L 410.25,606.17 M 415.41,598.23 L 418.15,596.25 L 418.15,608.15 M 415.41,608.15 L 420.21,608.15 M 432.45,596.25 L 429.02,596.25 L 425.59,599.23 L 425.59,606.17 L 427.88,608.15 L 431.30,608.15 L 433.59,606.17 L 433.59,603.69 L 431.30,601.70 L 425.59,601.70 M 328.25,626.23 L 325.96,624.25 L 322.54,624.25 L 320.25,626.23 L 320.25,634.17 L 322.54,636.15 L 325.96,636.15 L 328.25,634.17 M 334.21,624.25 L 337.63,624.25 L 339.92,626.23 L 339.92,628.22 L 337.63,630.20 L 334.21,630.20 L 331.92,628.22 L 331.92,626.23 Z M 334.21,630.20 L 331.92,632.18 L 331.92,634.17 L 334.21,636.15 L 337.63,636.15 L 339.92,634.17 L 339.92,632.18 L 337.63,630.20 M 351.75,641.73 L 349.46,639.75 L 346.04,639.75 L 343.75,641.73 L 343.75,649.67 L 346.04,651.65 L 349.46,651.65 L 351.75,649.67 M 356.91,641.73 L 359.65,639.75 L 359.65,651.65 M 356.91,651.65 L 361.71,651.65 M 372.35,651.65 L 372.35,639.75 L 367.09,647.88 L 374.06,647.88 M 386.76,641.73 L 384.47,639.75 L 381.05,639.75 L 378.76,641.73 L 378.76,649.67 L 381.05,651.65 L 384.47,651.65 L 386.76,649.67 M 391.92,641.73 L 394.66,639.75 L 394.66,651.65 M 391.92,651.65 L 396.72,651.65 M 404.39,639.75 L 407.81,639.75 L 410.10,641.73 L 410.10,649.67 L 407.81,651.65 L 404.39,651.65 L 402.10,649.67 L 402.10,641.73 Z M 456.25,633.23 L 453.96,631.25 L 450.54,631.25 L 448.25,633.23 L 448.25,641.17 L 450.54,643.15 L 453.96,643.15 L 456.25,641.17 M 461.41,633.23 L 464.15,631.25 L 464.15,643.15 M 461.41,643.15 L 466.21,643.15 M 473.88,631.25 L 477.30,631.25 L 479.59,633.23 L 479.59,635.22 L 477.30,637.20 L 473.88,637.20 L 471.59,635.22 L 471.59,633.23 Z M 473.88,637.20 L 471.59,639.18 L 471.59,641.17 L 473.88,643.15 L 477.30,643.15 L 479.59,641.17 L 479.59,639.18 L 477.30,637.20 M 499.25,604.23 L 496.96,602.25 L 493.54,602.25 L 491.25,604.23 L 491.25,612.17 L 493.54,614.15 L 496.96,614.15 L 499.25,612.17 M 502.92,604.23 L 505.21,602.25 L 508.63,602.25 L 510.92,604.23 L 510.92,606.71 L 502.92,614.15 L 510.92,614.15 M 516.88,602.25 L 520.30,602.25 L 522.59,604.23 L 522.59,606.22 L 520.30,608.20 L 516.88,608.20 L 514.59,606.22 L 514.59,604.23 Z M 516.88,608.20 L 514.59,610.18 L 514.59,612.17 L 516.88,614.15 L 520.30,614.15 L 522.59,612.17 L 522.59,610.18 L 520.30,608.20 M 467.25,662.23 L 464.96,660.25 L 461.54,660.25 L 459.25,662.23 L 459.25,670.17 L 461.54,672.15 L 464.96,672.15 L 467.25,670.17 M 470.92,662.23 L 473.21,660.25 L 476.63,660.25 L 478.92,662.23 L 478.92,664.71 L 470.92,672.15 L 478.92,672.15 M 484.88,660.25 L 488.30,660.25 L 490.59,662.23 L 490.59,670.17 L 488.30,672.15 L 484.88,672.15 L 482.59,670.17 L 482.59,662.23 Z M 478.25,698.23 L 475.96,696.25 L 472.54,696.25 L 470.25,698.23 L 470.25,706.17 L 472.54,708.15 L 475.96,708.15 L 478.25,706.17 M 483.41,698.23 L 486.15,696.25 L 486.15,708.15 M 483.41,708.15 L 488.21,708.15 M 501.59,702.70 L 495.88,702.70 L 493.59,700.71 L 493.59,698.23 L 495.88,696.25 L 499.30,696.25 L 501.59,698.23 L 501.59,705.17 L 498.16,708.15 L 494.73,708.15 M 471.25,715.23 L 468.96,713.25 L 465.54,713.25 L 463.25,715.23 L 463.25,723.17 L 465.54,725.15 L 468.96,725.15 L 471.25,723.17 M 474.92,714.74 L 476.63,713.25 L 481.21,713.25 L 482.92,714.74 L 482.92,717.71 L 481.21,719.20 L 477.78,719.20 M 481.21,719.20 L 482.92,720.69 L 482.92,723.66 L 481.21,725.15 L 476.63,725.15 L 474.92,723.66 M 486.59,715.23 L 488.88,713.25 L 492.30,713.25 L 494.59,715.23 L 494.59,717.71 L 486.59,725.15 L 494.59,725.15 M 466.25,744.23 L 463.96,742.25 L 460.54,742.25 L 458.25,744.23 L 458.25,752.17 L 460.54,754.15 L 463.96,754.15 L 466.25,752.17 M 469.92,743.74 L 471.63,742.25 L 476.21,742.25 L 477.92,743.74 L 477.92,746.71 L 476.21,748.20 L 472.78,748.20 M 476.21,748.20 L 477.92,749.69 L 477.92,752.66 L 476.21,754.15 L 471.63,754.15 L 469.92,752.66 M 519.25,736.23 L 516.96,734.25 L 513.54,734.25 L 511.25,736.23 L 511.25,744.17 L 513.54,746.15 L 516.96,746.15 L 519.25,744.17 M 528.18,746.15 L 528.18,734.25 L 522.92,742.38 L 529.89,742.38 M 541.45,734.25 L 538.02,734.25 L 534.59,737.23 L 534.59,744.17 L 536.88,746.15 L 540.30,746.15 L 542.59,744.17 L 542.59,741.69 L 540.30,739.70 L 534.59,739.70 M 591.25,685.23 L 588.96,683.25 L 585.54,683.25 L 583.25,685.23 L 583.25,693.17 L 585.54,695.15 L 588.96,695.15 L 591.25,693.17 M 596.41,685.23 L 599.15,683.25 L 599.15,695.15 M 596.41,695.15 L 601.21,695.15 M 606.59,685.23 L 608.88,683.25 L 612.30,683.25 L 614.59,685.23 L 614.59,687.71 L 606.59,695.15 L 614.59,695.15 M 618.26,685.23 L 620.55,683.25 L 623.97,683.25 L 626.26,685.23 L 626.26,687.71 L 618.26,695.15 L 626.26,695.15 M 571.25,717.23 L 568.96,715.25 L 565.54,715.25 L 563.25,717.23 L 563.25,725.17 L 565.54,727.15 L 568.96,727.15 L 571.25,725.17 M 576.41,717.23 L 579.15,715.25 L 579.15,727.15 M 576.41,727.15 L 581.21,727.15 M 591.85,727.15 L 591.85,715.25 L 586.59,723.38 L 593.56,723.38 M 598.26,716.74 L 599.97,715.25 L 604.55,715.25 L 606.26,716.74 L 606.26,719.71 L 604.55,721.20 L 601.12,721.20 M 604.55,721.20 L 606.26,722.69 L 606.26,725.66 L 604.55,727.15 L 599.97,727.15 L 598.26,725.66 M 151.25,680.25 L 159.25,680.25 M 155.25,680.25 L 155.25,692.15 M 162.92,692.15 L 162.92,680.25 L 168.63,680.25 L 170.92,682.23 L 170.92,684.22 L 168.63,686.20 L 162.92,686.20 M 174.59,682.23 L 176.88,680.25 L 180.30,680.25 L 182.59,682.23 L 182.59,684.71 L 174.59,692.15 L 182.59,692.15 M 187.75,682.23 L 190.49,680.25 L 190.49,692.15 M 187.75,692.15 L 192.55,692.15 M 150.25,706.25 L 158.25,706.25 M 154.25,706.25 L 154.25,718.15 M 161.92,718.15 L 161.92,706.25 L 167.63,706.25 L 169.92,708.23 L 169.92,710.22 L 167.63,712.20 L 161.92,712.20 M 175.08,708.23 L 177.82,706.25 L 177.82,718.15 M 175.08,718.15 L 179.88,718.15 M 144.25,729.25 L 152.25,729.25 M 148.25,729.25 L 148.25,741.15 M 155.92,741.15 L 155.92,729.25 L 161.63,729.25 L 163.92,731.23 L 163.92,733.22 L 161.63,735.20 L 155.92,735.20 M 167.59,731.23 L 169.88,729.25 L 173.30,729.25 L 175.59,731.23 L 175.59,733.71 L 167.59,741.15 L 175.59,741.15 M 155.25,749.23 L 152.96,747.25 L 149.54,747.25 L 147.25,749.23 L 147.25,757.17 L 149.54,759.15 L 152.96,759.15 L 155.25,757.17 M 166.92,753.70 L 161.21,753.70 L 158.92,751.71 L 158.92,749.23 L 161.21,747.25 L 164.63,747.25 L 166.92,749.23 L 166.92,756.17 L 163.49,759.15 L 160.06,759.15 M 229.25,731.23 L 226.96,729.25 L 223.54,729.25 L 221.25,731.23 L 221.25,739.17 L 223.54,741.15 L 226.96,741.15 L 229.25,739.17 M 238.18,741.15 L 238.18,729.25 L 232.92,737.38 L 239.89,737.38 M 246.88,729.25 L 250.30,729.25 L 252.59,731.23 L 252.59,733.22 L 250.30,735.20 L 246.88,735.20 L 244.59,733.22 L 244.59,731.23 Z M 246.88,735.20 L 244.59,737.18 L 244.59,739.17 L 246.88,741.15 L 250.30,741.15 L 252.59,739.17 L 252.59,737.18 L 250.30,735.20 M 275.25,668.23 L 272.96,666.25 L 269.54,666.25 L 267.25,668.23 L 267.25,676.17 L 269.54,678.15 L 272.96,678.15 L 275.25,676.17 M 278.92,666.25 L 286.92,666.25 L 286.92,668.23 L 281.78,678.15 M 354.25,760.23 L 351.96,758.25 L 348.54,758.25 L 346.25,760.23 L 346.25,768.17 L 348.54,770.15 L 351.96,770.15 L 354.25,768.17 M 359.41,760.23 L 362.15,758.25 L 362.15,770.15 M 359.41,770.15 L 364.21,770.15 M 369.59,760.23 L 371.88,758.25 L 375.30,758.25 L 377.59,760.23 L 377.59,762.71 L 369.59,770.15 L 377.59,770.15 M 241.25,676.23 L 238.96,674.25 L 235.54,674.25 L 233.25,676.23 L 233.25,684.17 L 235.54,686.15 L 238.96,686.15 L 241.25,684.17 M 246.41,676.23 L 249.15,674.25 L 249.15,686.15 M 246.41,686.15 L 251.21,686.15 M 327.25,729.23 L 324.96,727.25 L 321.54,727.25 L 319.25,729.23 L 319.25,737.17 L 321.54,739.15 L 324.96,739.15 L 327.25,737.17 M 332.41,729.23 L 335.15,727.25 L 335.15,739.15 M 332.41,739.15 L 337.21,739.15 M 342.59,728.74 L 344.30,727.25 L 348.88,727.25 L 350.59,728.74 L 350.59,731.71 L 348.88,733.20 L 345.45,733.20 M 348.88,733.20 L 350.59,734.69 L 350.59,737.66 L 348.88,739.15 L 344.30,739.15 L 342.59,737.66 M 8.51,376.15 L 8.51,364.25 L 3.25,372.38 L 10.22,372.38 M 11.25,381.25 L 3.25,381.25 L 3.25,386.21 L 8.96,386.21 L 11.25,388.19 L 11.25,391.17 L 8.96,393.15 L 5.54,393.15 L 3.25,391.17 M 10.11,397.25 L 6.68,397.25 L 3.25,400.23 L 3.25,407.17 L 5.54,409.15 L 8.96,409.15 L 11.25,407.17 L 11.25,404.69 L 8.96,402.70 L 3.25,402.70 M 146.15,354.75 L 134.25,354.75 L 134.25,349.04 L 136.23,346.75 L 138.22,346.75 L 140.20,349.04 L 140.20,354.75 M 140.20,350.75 L 146.15,346.75 M 140.70,335.08 L 140.70,340.79 L 138.71,343.08 L 136.23,343.08 L 134.25,340.79 L 134.25,337.37 L 136.23,335.08 L 143.18,335.08 L 146.15,338.51 L 146.15,341.94 M 134.25,329.12 L 134.25,325.70 L 136.23,323.41 L 138.22,323.41 L 140.20,325.70 L 140.20,329.12 L 138.22,331.41 L 136.23,331.41 Z M 140.20,329.12 L 142.18,331.41 L 144.17,331.41 L 146.15,329.12 L 146.15,325.70 L 144.17,323.41 L 142.18,323.41 L 140.20,325.70 M 150.15,408.75 L 138.25,408.75 L 138.25,403.04 L 140.23,400.75 L 142.22,400.75 L 144.20,403.04 L 144.20,408.75 M 144.20,404.75 L 150.15,400.75 M 140.23,395.59 L 138.25,392.85 L 150.15,392.85 M 150.15,395.59 L 150.15,390.79 M 140.23,385.41 L 138.25,383.12 L 138.25,379.70 L 140.23,377.41 L 142.71,377.41 L 150.15,385.41 L 150.15,377.41 M 140.23,373.74 L 138.25,371.45 L 138.25,368.03 L 140.23,365.74 L 142.71,365.74 L 150.15,373.74 L 150.15,365.74 M 121.15,425.75 L 109.25,425.75 L 109.25,420.04 L 111.23,417.75 L 113.22,417.75 L 115.20,420.04 L 115.20,425.75 M 115.20,421.75 L 121.15,417.75 M 111.23,412.59 L 109.25,409.85 L 121.15,409.85 M 121.15,412.59 L 121.15,407.79 M 153.15,471.75 L 141.25,471.75 L 141.25,466.04 L 143.23,463.75 L 145.22,463.75 L 147.20,466.04 L 147.20,471.75 M 147.20,467.75 L 153.15,463.75 M 143.23,458.59 L 141.25,455.85 L 153.15,455.85 M 153.15,458.59 L 153.15,453.79 M 153.15,443.15 L 141.25,443.15 L 149.38,448.41 L 149.38,441.44 M 141.25,434.45 L 141.25,431.03 L 143.23,428.74 L 151.17,428.74 L 153.15,431.03 L 153.15,434.45 L 151.17,436.74 L 143.23,436.74 Z M 138.15,471.75 L 126.25,471.75 L 126.25,466.04 L 128.23,463.75 L 130.22,463.75 L 132.20,466.04 L 132.20,471.75 M 132.20,467.75 L 138.15,463.75 M 128.23,460.08 L 126.25,457.79 L 126.25,454.37 L 128.23,452.08 L 130.71,452.08 L 138.15,460.08 L 138.15,452.08 M 128.23,446.92 L 126.25,444.18 L 138.15,444.18 M 138.15,446.92 L 138.15,442.12 M 61.15,492.75 L 49.25,492.75 L 49.25,487.04 L 51.23,484.75 L 53.22,484.75 L 55.20,487.04 L 55.20,492.75 M 55.20,488.75 L 61.15,484.75 M 51.23,479.59 L 49.25,476.85 L 61.15,476.85 M 61.15,479.59 L 61.15,474.79 M 61.15,464.15 L 49.25,464.15 L 57.38,469.41 L 57.38,462.44 M 49.25,449.74 L 49.25,457.74 L 54.21,457.74 L 54.21,452.03 L 56.19,449.74 L 59.17,449.74 L 61.15,452.03 L 61.15,455.45 L 59.17,457.74 M 79.15,492.75 L 67.25,492.75 L 67.25,487.04 L 69.23,484.75 L 71.22,484.75 L 73.20,487.04 L 73.20,492.75 M 73.20,488.75 L 79.15,484.75 M 69.23,479.59 L 67.25,476.85 L 79.15,476.85 M 79.15,479.59 L 79.15,474.79 M 79.15,464.15 L 67.25,464.15 L 75.38,469.41 L 75.38,462.44 M 67.25,455.45 L 67.25,452.03 L 69.23,449.74 L 71.22,449.74 L 73.20,452.03 L 73.20,455.45 L 71.22,457.74 L 69.23,457.74 Z M 73.20,455.45 L 75.18,457.74 L 77.17,457.74 L 79.15,455.45 L 79.15,452.03 L 77.17,449.74 L 75.18,449.74 L 73.20,452.03 M 95.15,477.75 L 83.25,477.75 L 83.25,472.04 L 85.23,469.75 L 87.22,469.75 L 89.20,472.04 L 89.20,477.75 M 89.20,473.75 L 95.15,469.75 M 84.74,466.08 L 83.25,464.37 L 83.25,459.79 L 84.74,458.08 L 87.71,458.08 L 89.20,459.79 L 89.20,463.22 M 89.20,459.79 L 90.69,458.08 L 93.66,458.08 L 95.15,459.79 L 95.15,464.37 L 93.66,466.08 M 85.23,452.92 L 83.25,450.18 L 95.15,450.18 M 95.15,452.92 L 95.15,448.12 M 30.15,527.75 L 18.25,527.75 L 18.25,522.04 L 20.23,519.75 L 22.22,519.75 L 24.20,522.04 L 24.20,527.75 M 24.20,523.75 L 30.15,519.75 M 20.23,514.59 L 18.25,511.85 L 30.15,511.85 M 30.15,514.59 L 30.15,509.79 M 18.25,496.41 L 18.25,504.41 L 23.21,504.41 L 23.21,498.70 L 25.19,496.41 L 28.17,496.41 L 30.15,498.70 L 30.15,502.12 L 28.17,504.41 M 49.15,538.75 L 37.25,538.75 L 37.25,533.04 L 39.23,530.75 L 41.22,530.75 L 43.20,533.04 L 43.20,538.75 M 43.20,534.75 L 49.15,530.75 M 39.23,525.59 L 37.25,522.85 L 49.15,522.85 M 49.15,525.59 L 49.15,520.79 M 38.74,515.41 L 37.25,513.70 L 37.25,509.12 L 38.74,507.41 L 41.71,507.41 L 43.20,509.12 L 43.20,512.55 M 43.20,509.12 L 44.69,507.41 L 47.66,507.41 L 49.15,509.12 L 49.15,513.70 L 47.66,515.41 M 37.25,503.74 L 37.25,495.74 L 39.23,495.74 L 49.15,500.88 M 166.15,515.75 L 154.25,515.75 L 154.25,510.04 L 156.23,507.75 L 158.22,507.75 L 160.20,510.04 L 160.20,515.75 M 160.20,511.75 L 166.15,507.75 M 154.25,497.22 L 154.25,500.65 L 157.22,504.08 L 164.17,504.08 L 166.15,501.79 L 166.15,498.37 L 164.17,496.08 L 161.69,496.08 L 159.70,498.37 L 159.70,504.08 M 154.25,485.55 L 154.25,488.98 L 157.22,492.41 L 164.17,492.41 L 166.15,490.12 L 166.15,486.70 L 164.17,484.41 L 161.69,484.41 L 159.70,486.70 L 159.70,492.41 M 193.15,512.75 L 181.25,512.75 L 181.25,507.04 L 183.23,504.75 L 185.22,504.75 L 187.20,507.04 L 187.20,512.75 M 187.20,508.75 L 193.15,504.75 M 182.74,501.08 L 181.25,499.37 L 181.25,494.79 L 182.74,493.08 L 185.71,493.08 L 187.20,494.79 L 187.20,498.22 M 187.20,494.79 L 188.69,493.08 L 191.66,493.08 L 193.15,494.79 L 193.15,499.37 L 191.66,501.08 M 181.25,489.41 L 181.25,481.41 L 183.23,481.41 L 193.15,486.55 M 272.15,513.75 L 260.25,513.75 L 260.25,508.04 L 262.23,505.75 L 264.22,505.75 L 266.20,508.04 L 266.20,513.75 M 266.20,509.75 L 272.15,505.75 M 261.74,502.08 L 260.25,500.37 L 260.25,495.79 L 261.74,494.08 L 264.71,494.08 L 266.20,495.79 L 266.20,499.22 M 266.20,495.79 L 267.69,494.08 L 270.66,494.08 L 272.15,495.79 L 272.15,500.37 L 270.66,502.08 M 260.25,483.55 L 260.25,486.98 L 263.23,490.41 L 270.17,490.41 L 272.15,488.12 L 272.15,484.70 L 270.17,482.41 L 267.69,482.41 L 265.70,484.70 L 265.70,490.41 M 280.23,566.75 L 278.25,569.04 L 278.25,572.46 L 280.23,574.75 L 288.17,574.75 L 290.15,572.46 L 290.15,569.04 L 288.17,566.75 M 278.25,555.08 L 278.25,563.08 L 283.21,563.08 L 283.21,557.37 L 285.19,555.08 L 288.17,555.08 L 290.15,557.37 L 290.15,560.79 L 288.17,563.08 M 280.23,551.41 L 278.25,549.12 L 278.25,545.70 L 280.23,543.41 L 282.71,543.41 L 290.15,551.41 L 290.15,543.41 M 312.23,556.75 L 310.25,559.04 L 310.25,562.46 L 312.23,564.75 L 320.17,564.75 L 322.15,562.46 L 322.15,559.04 L 320.17,556.75 M 310.25,546.22 L 310.25,549.65 L 313.23,553.08 L 320.17,553.08 L 322.15,550.79 L 322.15,547.37 L 320.17,545.08 L 317.69,545.08 L 315.70,547.37 L 315.70,553.08 M 429.23,365.75 L 427.25,368.04 L 427.25,371.46 L 429.23,373.75 L 437.17,373.75 L 439.15,371.46 L 439.15,368.04 L 437.17,365.75 M 429.23,360.59 L 427.25,357.85 L 439.15,357.85 M 439.15,360.59 L 439.15,355.79 M 428.74,350.41 L 427.25,348.70 L 427.25,344.12 L 428.74,342.41 L 431.71,342.41 L 433.20,344.12 L 433.20,347.55 M 433.20,344.12 L 434.69,342.41 L 437.66,342.41 L 439.15,344.12 L 439.15,348.70 L 437.66,350.41 M 427.25,331.88 L 427.25,335.31 L 430.23,338.74 L 437.17,338.74 L 439.15,336.45 L 439.15,333.03 L 437.17,330.74 L 434.69,330.74 L 432.70,333.03 L 432.70,338.74 M 429.23,418.75 L 427.25,421.04 L 427.25,424.46 L 429.23,426.75 L 437.17,426.75 L 439.15,424.46 L 439.15,421.04 L 437.17,418.75 M 429.23,413.59 L 427.25,410.85 L 439.15,410.85 M 439.15,413.59 L 439.15,408.79 M 428.74,403.41 L 427.25,401.70 L 427.25,397.12 L 428.74,395.41 L 431.71,395.41 L 433.20,397.12 L 433.20,400.55 M 433.20,397.12 L 434.69,395.41 L 437.66,395.41 L 439.15,397.12 L 439.15,401.70 L 437.66,403.41 M 427.25,389.45 L 427.25,386.03 L 429.23,383.74 L 431.22,383.74 L 433.20,386.03 L 433.20,389.45 L 431.22,391.74 L 429.23,391.74 Z M 433.20,389.45 L 435.18,391.74 L 437.17,391.74 L 439.15,389.45 L 439.15,386.03 L 437.17,383.74 L 435.18,383.74 L 433.20,386.03 M 429.23,468.75 L 427.25,471.04 L 427.25,474.46 L 429.23,476.75 L 437.17,476.75 L 439.15,474.46 L 439.15,471.04 L 437.17,468.75 M 429.23,463.59 L 427.25,460.85 L 439.15,460.85 M 439.15,463.59 L 439.15,458.79 M 428.74,453.41 L 427.25,451.70 L 427.25,447.12 L 428.74,445.41 L 431.71,445.41 L 433.20,447.12 L 433.20,450.55 M 433.20,447.12 L 434.69,445.41 L 437.66,445.41 L 439.15,447.12 L 439.15,451.70 L 437.66,453.41 M 427.25,433.74 L 427.25,441.74 L 432.21,441.74 L 432.21,436.03 L 434.19,433.74 L 437.17,433.74 L 439.15,436.03 L 439.15,439.45 L 437.17,441.74 M 500.23,401.75 L 498.25,404.04 L 498.25,407.46 L 500.23,409.75 L 508.17,409.75 L 510.15,407.46 L 510.15,404.04 L 508.17,401.75 M 500.23,396.26 L 498.25,393.52 L 510.15,393.52 M 510.15,396.26 L 510.15,391.46 M 499.74,385.75 L 498.25,384.04 L 498.25,379.46 L 499.74,377.75 L 502.71,377.75 L 504.20,379.46 L 504.20,382.89 M 504.20,379.46 L 505.69,377.75 L 508.66,377.75 L 510.15,379.46 L 510.15,384.04 L 508.66,385.75 M 498.25,373.75 L 498.25,365.75 L 500.23,365.75 L 510.15,370.89 M 500.23,353.75 L 498.25,356.04 L 498.25,359.46 L 500.23,361.75 L 508.17,361.75 L 510.15,359.46 L 510.15,356.04 L 508.17,353.75 M 500.23,348.26 L 498.25,345.52 L 510.15,345.52 M 510.15,348.26 L 510.15,343.46 M 510.15,332.49 L 498.25,332.49 L 506.38,337.75 L 506.38,330.78 M 500.23,325.75 L 498.25,323.46 L 498.25,320.04 L 500.23,317.75 L 502.71,317.75 L 510.15,325.75 L 510.15,317.75 M 617.23,280.75 L 615.25,283.04 L 615.25,286.46 L 617.23,288.75 L 625.17,288.75 L 627.15,286.46 L 627.15,283.04 L 625.17,280.75 M 617.23,277.08 L 615.25,274.79 L 615.25,271.37 L 617.23,269.08 L 619.71,269.08 L 627.15,277.08 L 627.15,269.08 M 617.23,263.92 L 615.25,261.18 L 627.15,261.18 M 627.15,263.92 L 627.15,259.12 M 599.23,366.75 L 597.25,369.04 L 597.25,372.46 L 599.23,374.75 L 607.17,374.75 L 609.15,372.46 L 609.15,369.04 L 607.17,366.75 M 599.23,363.08 L 597.25,360.79 L 597.25,357.37 L 599.23,355.08 L 601.71,355.08 L 609.15,363.08 L 609.15,355.08 M 599.23,351.41 L 597.25,349.12 L 597.25,345.70 L 599.23,343.41 L 601.71,343.41 L 609.15,351.41 L 609.15,343.41 M 660.23,480.75 L 658.25,483.04 L 658.25,486.46 L 660.23,488.75 L 668.17,488.75 L 670.15,486.46 L 670.15,483.04 L 668.17,480.75 M 660.23,477.08 L 658.25,474.79 L 658.25,471.37 L 660.23,469.08 L 662.71,469.08 L 670.15,477.08 L 670.15,469.08 M 658.25,458.55 L 658.25,461.98 L 661.23,465.41 L 668.17,465.41 L 670.15,463.12 L 670.15,459.70 L 668.17,457.41 L 665.69,457.41 L 663.70,459.70 L 663.70,465.41 M 43.15,613.75 L 31.25,613.75 L 31.25,608.04 L 33.23,605.75 L 35.22,605.75 L 37.20,608.04 L 37.20,613.75 M 37.20,609.75 L 43.15,605.75 M 43.15,596.82 L 31.25,596.82 L 39.38,602.08 L 39.38,595.11 M 37.70,582.41 L 37.70,588.12 L 35.71,590.41 L 33.23,590.41 L 31.25,588.12 L 31.25,584.70 L 33.23,582.41 L 40.17,582.41 L 43.15,585.84 L 43.15,589.27 M 63.15,613.75 L 51.25,613.75 L 51.25,608.04 L 53.23,605.75 L 55.22,605.75 L 57.20,608.04 L 57.20,613.75 M 57.20,609.75 L 63.15,605.75 M 51.25,594.08 L 51.25,602.08 L 56.21,602.08 L 56.21,596.37 L 58.19,594.08 L 61.17,594.08 L 63.15,596.37 L 63.15,599.79 L 61.17,602.08 M 51.25,588.12 L 51.25,584.70 L 53.23,582.41 L 61.17,582.41 L 63.15,584.70 L 63.15,588.12 L 61.17,590.41 L 53.23,590.41 Z M 26.23,671.75 L 24.25,674.04 L 24.25,677.46 L 26.23,679.75 L 34.17,679.75 L 36.15,677.46 L 36.15,674.04 L 34.17,671.75 M 24.25,668.08 L 24.25,660.08 L 26.23,660.08 L 36.15,665.22 M 24.25,654.12 L 24.25,650.70 L 26.23,648.41 L 28.22,648.41 L 30.20,650.70 L 30.20,654.12 L 28.22,656.41 L 26.23,656.41 Z M 30.20,654.12 L 32.18,656.41 L 34.17,656.41 L 36.15,654.12 L 36.15,650.70 L 34.17,648.41 L 32.18,648.41 L 30.20,650.70 M 54.23,678.75 L 52.25,681.04 L 52.25,684.46 L 54.23,686.75 L 62.17,686.75 L 64.15,684.46 L 64.15,681.04 L 62.17,678.75 M 52.25,675.08 L 52.25,667.08 L 54.23,667.08 L 64.15,672.22 M 52.25,663.41 L 52.25,655.41 L 54.23,655.41 L 64.15,660.55 M 96.15,679.75 L 84.25,679.75 L 84.25,674.04 L 86.23,671.75 L 88.22,671.75 L 90.20,674.04 L 90.20,679.75 M 90.20,675.75 L 96.15,671.75 M 86.23,668.08 L 84.25,665.79 L 84.25,662.37 L 86.23,660.08 L 88.71,660.08 L 96.15,668.08 L 96.15,660.08 M 117.15,698.75 L 105.25,698.75 L 105.25,693.04 L 107.23,690.75 L 109.22,690.75 L 111.20,693.04 L 111.20,698.75 M 111.20,694.75 L 117.15,690.75 M 107.23,687.08 L 105.25,684.79 L 105.25,681.37 L 107.23,679.08 L 109.71,679.08 L 117.15,687.08 L 117.15,679.08 M 111.70,667.41 L 111.70,673.12 L 109.71,675.41 L 107.23,675.41 L 105.25,673.12 L 105.25,669.70 L 107.23,667.41 L 114.17,667.41 L 117.15,670.84 L 117.15,674.27 M 187.23,658.75 L 185.25,661.04 L 185.25,664.46 L 187.23,666.75 L 195.17,666.75 L 197.15,664.46 L 197.15,661.04 L 195.17,658.75 M 197.15,649.82 L 185.25,649.82 L 193.38,655.08 L 193.38,648.11 M 191.70,635.41 L 191.70,641.12 L 189.71,643.41 L 187.23,643.41 L 185.25,641.12 L 185.25,637.70 L 187.23,635.41 L 194.18,635.41 L 197.15,638.84 L 197.15,642.27 M 199.23,704.75 L 197.25,707.04 L 197.25,710.46 L 199.23,712.75 L 207.17,712.75 L 209.15,710.46 L 209.15,707.04 L 207.17,704.75 M 198.74,701.08 L 197.25,699.37 L 197.25,694.79 L 198.74,693.08 L 201.71,693.08 L 203.20,694.79 L 203.20,698.22 M 203.20,694.79 L 204.69,693.08 L 207.66,693.08 L 209.15,694.79 L 209.15,699.37 L 207.66,701.08 M 197.25,687.12 L 197.25,683.70 L 199.23,681.41 L 201.22,681.41 L 203.20,683.70 L 203.20,687.12 L 201.22,689.41 L 199.23,689.41 Z M 203.20,687.12 L 205.18,689.41 L 207.17,689.41 L 209.15,687.12 L 209.15,683.70 L 207.17,681.41 L 205.18,681.41 L 203.20,683.70 M 71.23,744.75 L 69.25,747.04 L 69.25,750.46 L 71.23,752.75 L 79.17,752.75 L 81.15,750.46 L 81.15,747.04 L 79.17,744.75 M 69.25,738.79 L 69.25,735.37 L 71.23,733.08 L 73.22,733.08 L 75.20,735.37 L 75.20,738.79 L 73.22,741.08 L 71.23,741.08 Z M 75.20,738.79 L 77.18,741.08 L 79.17,741.08 L 81.15,738.79 L 81.15,735.37 L 79.17,733.08 L 77.18,733.08 L 75.20,735.37 M 69.25,727.12 L 69.25,723.70 L 71.23,721.41 L 79.17,721.41 L 81.15,723.70 L 81.15,727.12 L 79.17,729.41 L 71.23,729.41 Z M 297.23,751.75 L 295.25,754.04 L 295.25,757.46 L 297.23,759.75 L 305.17,759.75 L 307.15,757.46 L 307.15,754.04 L 305.17,751.75 M 296.74,748.08 L 295.25,746.37 L 295.25,741.79 L 296.74,740.08 L 299.71,740.08 L 301.20,741.79 L 301.20,745.22 M 301.20,741.79 L 302.69,740.08 L 305.66,740.08 L 307.15,741.79 L 307.15,746.37 L 305.66,748.08 M 301.70,728.41 L 301.70,734.12 L 299.71,736.41 L 297.23,736.41 L 295.25,734.12 L 295.25,730.70 L 297.23,728.41 L 304.18,728.41 L 307.15,731.84 L 307.15,735.27 M 391.23,759.26 L 389.25,756.52 L 401.15,756.52 M 401.15,759.26 L 401.15,754.46 M 391.23,747.59 L 389.25,744.85 L 401.15,744.85 M 401.15,747.59 L 401.15,742.79" stroke="#25262e" stroke-width="5.1"/>
<path d="M386.5,122.5 L448.5,122.5 L448.5,150.5 L386.5,150.5 Z M594.5,83.5 L657.5,83.5 L657.5,113.5 L594.5,113.5 Z M53.5,303.5 L70.5,303.5 L70.5,372.5 L53.5,372.5 Z M202.5,542.5 L264.5,542.5 L264.5,571.5 L202.5,571.5 Z M170.5,564.5 L199.5,564.5 L199.5,627.5 L170.5,627.5 Z M211.5,631.5 L274.5,631.5 L274.5,660.5 L211.5,660.5 Z M512.5,672.5 L575.5,672.5 L575.5,701.5 L512.5,701.5 Z M495.5,751.5 L555.5,751.5 L555.5,787.5 L495.5,787.5 Z M-17.5,648.5 L9.5,648.5 L9.5,678.5 L-17.5,678.5 Z M-17.5,686.5 L10.5,686.5 L10.5,749.5 L-17.5,749.5 Z M14.5,686.5 L44.5,686.5 L44.5,749.5 L14.5,749.5 Z" stroke="#25262e" stroke-width="8" stroke-linejoin="bevel"/>
<line x1="241" y1="20.5" x2="384" y2="20.5" stroke="#25262e" stroke-width="8"/>
<line x1="231" y1="42" x2="231" y2="64" stroke="#25262e" stroke-width="8"/>
<line x1="393" y1="42" x2="393" y2="64" stroke="#25262e" stroke-width="8"/>
<line x1="310" y1="86" x2="351" y2="86" stroke="#25262e" stroke-width="8"/>
<line x1="63" y1="91" x2="175" y2="91" stroke="#25262e" stroke-width="6.5"/>
<line x1="1.5" y1="159" x2="1.5" y2="169" stroke="#25262e" stroke-width="8"/>
<line x1="79" y1="375" x2="102" y2="375" stroke="#25262e" stroke-width="8"/>
<line x1="118" y1="339" x2="127" y2="339" stroke="#25262e" stroke-width="8"/>
<line x1="153" y1="540" x2="162" y2="540" stroke="#25262e" stroke-width="8"/>
<line x1="180" y1="537" x2="190" y2="537" stroke="#25262e" stroke-width="8"/>
<line x1="229" y1="506" x2="229" y2="514" stroke="#25262e" stroke-width="8"/>
<line x1="116" y1="565" x2="116" y2="574" stroke="#25262e" stroke-width="8"/>
<line x1="139" y1="603" x2="139" y2="612" stroke="#25262e" stroke-width="8"/>
<line x1="139" y1="628" x2="139" y2="638" stroke="#25262e" stroke-width="8"/>
<line x1="279" y1="497" x2="288" y2="497" stroke="#25262e" stroke-width="8"/>
<line x1="325.5" y1="488" x2="325.5" y2="498" stroke="#25262e" stroke-width="8"/>
<line x1="312" y1="590" x2="322" y2="590" stroke="#25262e" stroke-width="8"/>
<line x1="279" y1="601" x2="289" y2="601" stroke="#25262e" stroke-width="8"/>
<line x1="294" y1="650" x2="304" y2="650" stroke="#25262e" stroke-width="8"/>
<line x1="327" y1="661" x2="336" y2="661" stroke="#25262e" stroke-width="8"/>
<line x1="358" y1="676" x2="368" y2="676" stroke="#25262e" stroke-width="8"/>
<line x1="389" y1="676" x2="399" y2="676" stroke="#25262e" stroke-width="8"/>
<line x1="369.5" y1="616" x2="369.5" y2="626" stroke="#25262e" stroke-width="8"/>
<line x1="420" y1="617" x2="420" y2="626" stroke="#25262e" stroke-width="8"/>
<line x1="464" y1="599" x2="464" y2="608" stroke="#25262e" stroke-width="8"/>
<line x1="434" y1="648" x2="434" y2="658" stroke="#25262e" stroke-width="8"/>
<line x1="434" y1="679" x2="434" y2="689" stroke="#25262e" stroke-width="8"/>
<line x1="439" y1="712" x2="439" y2="722" stroke="#25262e" stroke-width="8"/>
<line x1="434" y1="742" x2="434" y2="752" stroke="#25262e" stroke-width="8"/>
<line x1="479" y1="682" x2="479" y2="690" stroke="#25262e" stroke-width="8"/>
<line x1="537" y1="718" x2="537" y2="728" stroke="#25262e" stroke-width="8"/>
<line x1="258.5" y1="692" x2="258.5" y2="705" stroke="#25262e" stroke-width="8"/>
<line x1="258.5" y1="711" x2="258.5" y2="722" stroke="#25262e" stroke-width="8"/>
<line x1="295" y1="703" x2="305" y2="703" stroke="#25262e" stroke-width="8"/>
<line x1="338" y1="711" x2="338" y2="722" stroke="#25262e" stroke-width="8"/>
<line x1="389" y1="723.5" x2="399" y2="723.5" stroke="#25262e" stroke-width="8"/>
<line x1="264" y1="751" x2="274" y2="751" stroke="#25262e" stroke-width="8"/>
<line x1="356" y1="743" x2="356" y2="752" stroke="#25262e" stroke-width="8"/>
<line x1="217" y1="697.5" x2="226" y2="697.5" stroke="#25262e" stroke-width="8"/>
<line x1="54" y1="710.5" x2="63" y2="710.5" stroke="#25262e" stroke-width="8"/>
<line x1="56.5" y1="757" x2="56.5" y2="765" stroke="#25262e" stroke-width="8"/>
<line x1="432" y1="163" x2="432" y2="173" stroke="#25262e" stroke-width="8"/>
<line x1="426" y1="206" x2="426" y2="215" stroke="#25262e" stroke-width="8"/>
<line x1="626" y1="122" x2="626" y2="131" stroke="#25262e" stroke-width="8"/>
<line x1="667" y1="168" x2="667" y2="178" stroke="#25262e" stroke-width="8"/>
<line x1="630" y1="233" x2="630" y2="243" stroke="#25262e" stroke-width="8"/>
<line x1="635" y1="273" x2="644" y2="273" stroke="#25262e" stroke-width="8"/>
<line x1="446" y1="351" x2="455" y2="351" stroke="#25262e" stroke-width="8"/>
<line x1="446" y1="405" x2="455" y2="405" stroke="#25262e" stroke-width="8"/>
<line x1="446" y1="455" x2="455" y2="455" stroke="#25262e" stroke-width="8"/>
<line x1="481" y1="338" x2="491" y2="338" stroke="#25262e" stroke-width="8"/>
<line x1="481" y1="390" x2="491" y2="390" stroke="#25262e" stroke-width="8"/>
<line x1="494" y1="418" x2="494" y2="427" stroke="#25262e" stroke-width="8"/>
<line x1="615" y1="355" x2="625" y2="355" stroke="#25262e" stroke-width="8"/>
<line x1="626" y1="413" x2="626" y2="423" stroke="#25262e" stroke-width="8"/>
<line x1="626" y1="446" x2="626" y2="456" stroke="#25262e" stroke-width="8"/>
<line x1="667" y1="366" x2="667" y2="376" stroke="#25262e" stroke-width="8"/>
<line x1="667" y1="389" x2="667" y2="399" stroke="#25262e" stroke-width="8"/>
<line x1="659" y1="432" x2="668" y2="432" stroke="#25262e" stroke-width="8"/>
<path d="M 54.25,108.65 L 54.25,96.75 L 59.96,96.75 L 62.25,98.73 L 62.25,100.72 L 59.96,102.70 L 54.25,102.70 M 66.25,108.65 L 66.25,100.22 L 70.25,96.75 L 74.25,100.22 L 74.25,108.65 M 66.25,104.19 L 74.25,104.19 M 80.54,96.75 L 83.96,96.75 L 86.25,98.73 L 86.25,106.67 L 83.96,108.65 L 80.54,108.65 L 78.25,106.67 L 78.25,98.73 Z M 90.25,110.63 L 98.25,110.63 M 110.25,98.73 L 107.96,96.75 L 104.54,96.75 L 102.25,98.73 L 102.25,100.72 L 104.54,102.70 L 107.96,102.70 L 110.25,104.68 L 110.25,106.67 L 107.96,108.65 L 104.54,108.65 L 102.25,106.67 M 114.25,96.75 L 122.25,96.75 M 118.25,96.75 L 118.25,108.65 M 126.25,108.65 L 126.25,96.75 L 130.25,102.70 L 134.25,96.75 L 134.25,108.65 M 158.25,98.73 L 155.96,96.75 L 152.54,96.75 L 150.25,98.73 L 150.25,100.72 L 152.54,102.70 L 155.96,102.70 L 158.25,104.68 L 158.25,106.67 L 155.96,108.65 L 152.54,108.65 L 150.25,106.67 M 162.25,96.75 L 163.96,108.65 L 166.25,101.71 L 168.54,108.65 L 170.25,96.75 M 174.25,98.73 L 176.54,96.75 L 179.96,96.75 L 182.25,98.73 L 182.25,101.21 L 174.25,108.65 L 182.25,108.65 M 6.25,144.70 L 0.54,144.70 L -1.75,142.71 L -1.75,140.23 L 0.54,138.25 L 3.96,138.25 L 6.25,140.23 L 6.25,147.18 L 2.82,150.15 L -0.61,150.15 M 9.92,140.23 L 12.21,138.25 L 15.63,138.25 L 17.92,140.23 L 17.92,142.71 L 9.92,150.15 L 17.92,150.15 M 238.25,133.15 L 238.25,121.25 L 243.96,121.25 L 246.25,123.23 L 246.25,125.22 L 243.96,127.20 L 238.25,127.20 M 258.05,121.25 L 250.05,121.25 L 250.05,133.15 L 258.05,133.15 M 250.05,127.20 L 255.76,127.20 M 263.34,123.23 L 266.08,121.25 L 266.08,133.15 M 263.34,133.15 L 268.14,133.15 M 275.94,121.25 L 279.36,121.25 L 281.65,123.23 L 281.65,131.17 L 279.36,133.15 L 275.94,133.15 L 273.65,131.17 L 273.65,123.23 Z M 285.45,135.13 L 293.45,135.13 M 297.25,121.25 L 297.25,133.15 M 305.25,121.25 L 305.25,133.15 M 297.25,127.20 L 305.25,127.20 M 309.05,123.23 L 311.34,121.25 L 314.76,121.25 L 317.05,123.23 L 317.05,125.71 L 309.05,133.15 L 317.05,133.15 M 321.42,127.70 L 328.28,127.70 M 324.85,124.72 L 324.85,130.67 M 352.45,123.23 L 350.16,121.25 L 346.74,121.25 L 344.45,123.23 L 344.45,125.22 L 346.74,127.20 L 350.16,127.20 L 352.45,129.18 L 352.45,131.17 L 350.16,133.15 L 346.74,133.15 L 344.45,131.17 M 357.74,123.23 L 360.48,121.25 L 360.48,133.15 M 357.74,133.15 L 362.54,133.15 M 463.25,132.23 L 460.96,130.25 L 457.54,130.25 L 455.25,132.23 L 455.25,140.17 L 457.54,142.15 L 460.96,142.15 L 463.25,140.17 M 468.41,132.23 L 471.15,130.25 L 471.15,142.15 M 468.41,142.15 L 473.21,142.15 M 478.59,132.23 L 480.88,130.25 L 484.30,130.25 L 486.59,132.23 L 486.59,134.71 L 478.59,142.15 L 486.59,142.15 M 490.26,131.74 L 491.97,130.25 L 496.55,130.25 L 498.26,131.74 L 498.26,134.71 L 496.55,136.20 L 493.12,136.20 M 496.55,136.20 L 498.26,137.69 L 498.26,140.66 L 496.55,142.15 L 491.97,142.15 L 490.26,140.66 M 466.25,164.23 L 463.96,162.25 L 460.54,162.25 L 458.25,164.23 L 458.25,172.17 L 460.54,174.15 L 463.96,174.15 L 466.25,172.17 M 471.41,164.23 L 474.15,162.25 L 474.15,174.15 M 471.41,174.15 L 476.21,174.15 M 486.85,174.15 L 486.85,162.25 L 481.59,170.38 L 488.56,170.38 M 495.55,162.25 L 498.97,162.25 L 501.26,164.23 L 501.26,172.17 L 498.97,174.15 L 495.55,174.15 L 493.26,172.17 L 493.26,164.23 Z M 458.25,207.23 L 455.96,205.25 L 452.54,205.25 L 450.25,207.23 L 450.25,215.17 L 452.54,217.15 L 455.96,217.15 L 458.25,215.17 M 463.41,207.23 L 466.15,205.25 L 466.15,217.15 M 463.41,217.15 L 468.21,217.15 M 478.85,217.15 L 478.85,205.25 L 473.59,213.38 L 480.56,213.38 M 486.75,207.23 L 489.49,205.25 L 489.49,217.15 M 486.75,217.15 L 491.55,217.15 M 273.25,272.15 L 273.25,260.25 L 278.96,260.25 L 281.25,262.23 L 281.25,264.22 L 278.96,266.20 L 273.25,266.20 M 277.25,266.20 L 281.25,272.15 M 291.78,260.25 L 288.35,260.25 L 284.92,263.23 L 284.92,270.17 L 287.21,272.15 L 290.63,272.15 L 292.92,270.17 L 292.92,267.69 L 290.63,265.70 L 284.92,265.70 M 296.59,262.23 L 298.88,260.25 L 302.30,260.25 L 304.59,262.23 L 304.59,264.71 L 296.59,272.15 L 304.59,272.15 M 555.25,96.23 L 552.96,94.25 L 549.54,94.25 L 547.25,96.23 L 547.25,104.17 L 549.54,106.15 L 552.96,106.15 L 555.25,104.17 M 560.41,96.23 L 563.15,94.25 L 563.15,106.15 M 560.41,106.15 L 565.21,106.15 M 575.85,106.15 L 575.85,94.25 L 570.59,102.38 L 577.56,102.38 M 587.52,106.15 L 587.52,94.25 L 582.26,102.38 L 589.23,102.38 M 567.25,123.23 L 564.96,121.25 L 561.54,121.25 L 559.25,123.23 L 559.25,131.17 L 561.54,133.15 L 564.96,133.15 L 567.25,131.17 M 572.41,123.23 L 575.15,121.25 L 575.15,133.15 M 572.41,133.15 L 577.21,133.15 M 582.59,122.74 L 584.30,121.25 L 588.88,121.25 L 590.59,122.74 L 590.59,125.71 L 588.88,127.20 L 585.45,127.20 M 588.88,127.20 L 590.59,128.69 L 590.59,131.66 L 588.88,133.15 L 584.30,133.15 L 582.59,131.66 M 599.52,133.15 L 599.52,121.25 L 594.26,129.38 L 601.23,129.38 M 606.25,145.23 L 603.96,143.25 L 600.54,143.25 L 598.25,145.23 L 598.25,153.17 L 600.54,155.15 L 603.96,155.15 L 606.25,153.17 M 611.41,145.23 L 614.15,143.25 L 614.15,155.15 M 611.41,155.15 L 616.21,155.15 M 621.59,144.74 L 623.30,143.25 L 627.88,143.25 L 629.59,144.74 L 629.59,147.71 L 627.88,149.20 L 624.45,149.20 M 627.88,149.20 L 629.59,150.69 L 629.59,153.66 L 627.88,155.15 L 623.30,155.15 L 621.59,153.66 M 633.26,144.74 L 634.97,143.25 L 639.55,143.25 L 641.26,144.74 L 641.26,147.71 L 639.55,149.20 L 636.12,149.20 M 639.55,149.20 L 641.26,150.69 L 641.26,153.66 L 639.55,155.15 L 634.97,155.15 L 633.26,153.66 M 606.25,167.23 L 603.96,165.25 L 600.54,165.25 L 598.25,167.23 L 598.25,175.17 L 600.54,177.15 L 603.96,177.15 L 606.25,175.17 M 611.41,167.23 L 614.15,165.25 L 614.15,177.15 M 611.41,177.15 L 616.21,177.15 M 621.59,166.74 L 623.30,165.25 L 627.88,165.25 L 629.59,166.74 L 629.59,169.71 L 627.88,171.20 L 624.45,171.20 M 627.88,171.20 L 629.59,172.69 L 629.59,175.66 L 627.88,177.15 L 623.30,177.15 L 621.59,175.66 M 633.26,167.23 L 635.55,165.25 L 638.97,165.25 L 641.26,167.23 L 641.26,169.71 L 633.26,177.15 L 641.26,177.15 M 622.25,215.23 L 619.96,213.25 L 616.54,213.25 L 614.25,215.23 L 614.25,223.17 L 616.54,225.15 L 619.96,225.15 L 622.25,223.17 M 625.92,215.23 L 628.21,213.25 L 631.63,213.25 L 633.92,215.23 L 633.92,217.71 L 625.92,225.15 L 633.92,225.15 M 637.59,213.25 L 645.59,213.25 L 645.59,215.23 L 640.45,225.15 M 53.54,282.25 L 56.96,282.25 L 59.25,284.23 L 59.25,292.17 L 56.96,294.15 L 53.54,294.15 L 51.25,292.17 L 51.25,284.23 Z M 55.82,291.18 L 59.25,294.15 M 62.92,283.74 L 64.63,282.25 L 69.21,282.25 L 70.92,283.74 L 70.92,286.71 L 69.21,288.20 L 65.78,288.20 M 69.21,288.20 L 70.92,289.69 L 70.92,292.66 L 69.21,294.15 L 64.63,294.15 L 62.92,292.66 M 191.25,444.15 L 191.25,432.25 L 196.96,432.25 L 199.25,434.23 L 199.25,436.22 L 196.96,438.20 L 191.25,438.20 M 195.25,438.20 L 199.25,444.15 M 204.41,434.23 L 207.15,432.25 L 207.15,444.15 M 204.41,444.15 L 209.21,444.15 M 219.85,444.15 L 219.85,432.25 L 214.59,440.38 L 221.56,440.38 M 226.26,434.23 L 228.55,432.25 L 231.97,432.25 L 234.26,434.23 L 234.26,436.71 L 226.26,444.15 L 234.26,444.15 M 191.25,464.15 L 191.25,452.25 L 196.96,452.25 L 199.25,454.23 L 199.25,456.22 L 196.96,458.20 L 191.25,458.20 M 195.25,458.20 L 199.25,464.15 M 204.41,454.23 L 207.15,452.25 L 207.15,464.15 M 204.41,464.15 L 209.21,464.15 M 219.85,464.15 L 219.85,452.25 L 214.59,460.38 L 221.56,460.38 M 231.52,464.15 L 231.52,452.25 L 226.26,460.38 L 233.23,460.38 M 222.25,489.23 L 219.96,487.25 L 216.54,487.25 L 214.25,489.23 L 214.25,497.17 L 216.54,499.15 L 219.96,499.15 L 222.25,497.17 M 233.92,487.25 L 225.92,487.25 L 225.92,492.21 L 231.63,492.21 L 233.92,494.19 L 233.92,497.17 L 231.63,499.15 L 228.21,499.15 L 225.92,497.17 M 242.85,499.15 L 242.85,487.25 L 237.59,495.38 L 244.56,495.38 M 317.25,482.15 L 317.25,470.25 L 322.96,470.25 L 325.25,472.23 L 325.25,474.22 L 322.96,476.20 L 317.25,476.20 M 321.25,476.20 L 325.25,482.15 M 328.92,470.25 L 336.92,470.25 L 336.92,472.23 L 331.78,482.15 M 107.25,583.23 L 104.96,581.25 L 101.54,581.25 L 99.25,583.23 L 99.25,591.17 L 101.54,593.15 L 104.96,593.15 L 107.25,591.17 M 118.92,581.25 L 110.92,581.25 L 110.92,586.21 L 116.63,586.21 L 118.92,588.19 L 118.92,591.17 L 116.63,593.15 L 113.21,593.15 L 110.92,591.17 M 124.88,581.25 L 128.30,581.25 L 130.59,583.23 L 130.59,591.17 L 128.30,593.15 L 124.88,593.15 L 122.59,591.17 L 122.59,583.23 Z M 91.25,604.23 L 88.96,602.25 L 85.54,602.25 L 83.25,604.23 L 83.25,612.17 L 85.54,614.15 L 88.96,614.15 L 91.25,612.17 M 102.92,602.25 L 94.92,602.25 L 94.92,607.21 L 100.63,607.21 L 102.92,609.19 L 102.92,612.17 L 100.63,614.15 L 97.21,614.15 L 94.92,612.17 M 106.59,603.74 L 108.30,602.25 L 112.88,602.25 L 114.59,603.74 L 114.59,606.71 L 112.88,608.20 L 109.45,608.20 M 112.88,608.20 L 114.59,609.69 L 114.59,612.66 L 112.88,614.15 L 108.30,614.15 L 106.59,612.66 M 3.25,602.74 L 4.96,601.25 L 9.54,601.25 L 11.25,602.74 L 11.25,605.71 L 9.54,607.20 L 6.11,607.20 M 9.54,607.20 L 11.25,608.69 L 11.25,611.66 L 9.54,613.15 L 4.96,613.15 L 3.25,611.66 M 83.25,639.15 L 83.25,627.25 L 88.96,627.25 L 91.25,629.23 L 91.25,631.22 L 88.96,633.20 L 83.25,633.20 M 87.25,633.20 L 91.25,639.15 M 94.92,627.25 L 102.92,627.25 L 102.92,629.23 L 97.78,639.15 M 108.88,627.25 L 112.30,627.25 L 114.59,629.23 L 114.59,637.17 L 112.30,639.15 L 108.88,639.15 L 106.59,637.17 L 106.59,629.23 Z M 113.25,658.15 L 113.25,646.25 L 118.96,646.25 L 121.25,648.23 L 121.25,650.22 L 118.96,652.20 L 113.25,652.20 M 117.25,652.20 L 121.25,658.15 M 132.92,652.70 L 127.21,652.70 L 124.92,650.71 L 124.92,648.23 L 127.21,646.25 L 130.63,646.25 L 132.92,648.23 L 132.92,655.17 L 129.49,658.15 L 126.06,658.15 M 136.59,647.74 L 138.30,646.25 L 142.88,646.25 L 144.59,647.74 L 144.59,650.71 L 142.88,652.20 L 139.45,652.20 M 142.88,652.20 L 144.59,653.69 L 144.59,656.66 L 142.88,658.15 L 138.30,658.15 L 136.59,656.66 M 221.25,590.15 L 221.25,578.25 L 226.96,578.25 L 229.25,580.23 L 229.25,582.22 L 226.96,584.20 L 221.25,584.20 M 225.25,584.20 L 229.25,590.15 M 232.92,578.25 L 240.92,578.25 L 240.92,580.23 L 235.78,590.15 M 246.08,580.23 L 248.82,578.25 L 248.82,590.15 M 246.08,590.15 L 250.88,590.15 M 231.25,615.23 L 228.96,613.25 L 225.54,613.25 L 223.25,615.23 L 223.25,623.17 L 225.54,625.15 L 228.96,625.15 L 231.25,623.17 M 242.92,613.25 L 234.92,613.25 L 234.92,618.21 L 240.63,618.21 L 242.92,620.19 L 242.92,623.17 L 240.63,625.15 L 237.21,625.15 L 234.92,623.17 M 248.08,615.23 L 250.82,613.25 L 250.82,625.15 M 248.08,625.15 L 252.88,625.15 M 480.25,437.23 L 477.96,435.25 L 474.54,435.25 L 472.25,437.23 L 472.25,445.17 L 474.54,447.15 L 477.96,447.15 L 480.25,445.17 M 485.41,437.23 L 488.15,435.25 L 488.15,447.15 M 485.41,447.15 L 490.21,447.15 M 495.59,436.74 L 497.30,435.25 L 501.88,435.25 L 503.59,436.74 L 503.59,439.71 L 501.88,441.20 L 498.45,441.20 M 501.88,441.20 L 503.59,442.69 L 503.59,445.66 L 501.88,447.15 L 497.30,447.15 L 495.59,445.66 M 515.26,441.70 L 509.55,441.70 L 507.26,439.71 L 507.26,437.23 L 509.55,435.25 L 512.97,435.25 L 515.26,437.23 L 515.26,444.18 L 511.83,447.15 L 508.40,447.15 M 659.25,349.23 L 656.96,347.25 L 653.54,347.25 L 651.25,349.23 L 651.25,357.17 L 653.54,359.15 L 656.96,359.15 L 659.25,357.17 M 662.92,349.23 L 665.21,347.25 L 668.63,347.25 L 670.92,349.23 L 670.92,351.71 L 662.92,359.15 L 670.92,359.15 M 674.59,348.74 L 676.30,347.25 L 680.88,347.25 L 682.59,348.74 L 682.59,351.71 L 680.88,353.20 L 677.45,353.20 M 680.88,353.20 L 682.59,354.69 L 682.59,357.66 L 680.88,359.15 L 676.30,359.15 L 674.59,357.66 M 620.25,388.23 L 617.96,386.25 L 614.54,386.25 L 612.25,388.23 L 612.25,396.17 L 614.54,398.15 L 617.96,398.15 L 620.25,396.17 M 623.92,388.23 L 626.21,386.25 L 629.63,386.25 L 631.92,388.23 L 631.92,390.71 L 623.92,398.15 L 631.92,398.15 M 640.85,398.15 L 640.85,386.25 L 635.59,394.38 L 642.56,394.38 M 578.25,412.23 L 575.96,410.25 L 572.54,410.25 L 570.25,412.23 L 570.25,420.17 L 572.54,422.15 L 575.96,422.15 L 578.25,420.17 M 581.92,412.23 L 584.21,410.25 L 587.63,410.25 L 589.92,412.23 L 589.92,414.71 L 581.92,422.15 L 589.92,422.15 M 601.59,410.25 L 593.59,410.25 L 593.59,415.21 L 599.30,415.21 L 601.59,417.19 L 601.59,420.17 L 599.30,422.15 L 595.88,422.15 L 593.59,420.17 M 578.25,448.23 L 575.96,446.25 L 572.54,446.25 L 570.25,448.23 L 570.25,456.17 L 572.54,458.15 L 575.96,458.15 L 578.25,456.17 M 583.41,448.23 L 586.15,446.25 L 586.15,458.15 M 583.41,458.15 L 588.21,458.15 M 601.59,446.25 L 593.59,446.25 L 593.59,451.21 L 599.30,451.21 L 601.59,453.19 L 601.59,456.17 L 599.30,458.15 L 595.88,458.15 L 593.59,456.17 M 363.25,598.23 L 360.96,596.25 L 357.54,596.25 L 355.25,598.23 L 355.25,606.17 L 357.54,608.15 L 360.96,608.15 L 363.25,606.17 M 368.41,598.23 L 371.15,596.25 L 371.15,608.15 M 368.41,608.15 L 373.21,608.15 M 378.59,596.25 L 386.59,596.25 L 386.59,598.23 L 381.45,608.15 M 410.25,598.23 L 407.96,596.25 L 404.54,596.25 L 402.25,598.23 L 402.25,606.17 L 404.54,608.15 L 407.96,608.15 L 410.25,606.17 M 415.41,598.23 L 418.15,596.25 L 418.15,608.15 M 415.41,608.15 L 420.21,608.15 M 432.45,596.25 L 429.02,596.25 L 425.59,599.23 L 425.59,606.17 L 427.88,608.15 L 431.30,608.15 L 433.59,606.17 L 433.59,603.69 L 431.30,601.70 L 425.59,601.70 M 328.25,626.23 L 325.96,624.25 L 322.54,624.25 L 320.25,626.23 L 320.25,634.17 L 322.54,636.15 L 325.96,636.15 L 328.25,634.17 M 334.21,624.25 L 337.63,624.25 L 339.92,626.23 L 339.92,628.22 L 337.63,630.20 L 334.21,630.20 L 331.92,628.22 L 331.92,626.23 Z M 334.21,630.20 L 331.92,632.18 L 331.92,634.17 L 334.21,636.15 L 337.63,636.15 L 339.92,634.17 L 339.92,632.18 L 337.63,630.20 M 351.75,641.73 L 349.46,639.75 L 346.04,639.75 L 343.75,641.73 L 343.75,649.67 L 346.04,651.65 L 349.46,651.65 L 351.75,649.67 M 356.91,641.73 L 359.65,639.75 L 359.65,651.65 M 356.91,651.65 L 361.71,651.65 M 372.35,651.65 L 372.35,639.75 L 367.09,647.88 L 374.06,647.88 M 386.76,641.73 L 384.47,639.75 L 381.05,639.75 L 378.76,641.73 L 378.76,649.67 L 381.05,651.65 L 384.47,651.65 L 386.76,649.67 M 391.92,641.73 L 394.66,639.75 L 394.66,651.65 M 391.92,651.65 L 396.72,651.65 M 404.39,639.75 L 407.81,639.75 L 410.10,641.73 L 410.10,649.67 L 407.81,651.65 L 404.39,651.65 L 402.10,649.67 L 402.10,641.73 Z M 456.25,633.23 L 453.96,631.25 L 450.54,631.25 L 448.25,633.23 L 448.25,641.17 L 450.54,643.15 L 453.96,643.15 L 456.25,641.17 M 461.41,633.23 L 464.15,631.25 L 464.15,643.15 M 461.41,643.15 L 466.21,643.15 M 473.88,631.25 L 477.30,631.25 L 479.59,633.23 L 479.59,635.22 L 477.30,637.20 L 473.88,637.20 L 471.59,635.22 L 471.59,633.23 Z M 473.88,637.20 L 471.59,639.18 L 471.59,641.17 L 473.88,643.15 L 477.30,643.15 L 479.59,641.17 L 479.59,639.18 L 477.30,637.20 M 499.25,604.23 L 496.96,602.25 L 493.54,602.25 L 491.25,604.23 L 491.25,612.17 L 493.54,614.15 L 496.96,614.15 L 499.25,612.17 M 502.92,604.23 L 505.21,602.25 L 508.63,602.25 L 510.92,604.23 L 510.92,606.71 L 502.92,614.15 L 510.92,614.15 M 516.88,602.25 L 520.30,602.25 L 522.59,604.23 L 522.59,606.22 L 520.30,608.20 L 516.88,608.20 L 514.59,606.22 L 514.59,604.23 Z M 516.88,608.20 L 514.59,610.18 L 514.59,612.17 L 516.88,614.15 L 520.30,614.15 L 522.59,612.17 L 522.59,610.18 L 520.30,608.20 M 467.25,662.23 L 464.96,660.25 L 461.54,660.25 L 459.25,662.23 L 459.25,670.17 L 461.54,672.15 L 464.96,672.15 L 467.25,670.17 M 470.92,662.23 L 473.21,660.25 L 476.63,660.25 L 478.92,662.23 L 478.92,664.71 L 470.92,672.15 L 478.92,672.15 M 484.88,660.25 L 488.30,660.25 L 490.59,662.23 L 490.59,670.17 L 488.30,672.15 L 484.88,672.15 L 482.59,670.17 L 482.59,662.23 Z M 478.25,698.23 L 475.96,696.25 L 472.54,696.25 L 470.25,698.23 L 470.25,706.17 L 472.54,708.15 L 475.96,708.15 L 478.25,706.17 M 483.41,698.23 L 486.15,696.25 L 486.15,708.15 M 483.41,708.15 L 488.21,708.15 M 501.59,702.70 L 495.88,702.70 L 493.59,700.71 L 493.59,698.23 L 495.88,696.25 L 499.30,696.25 L 501.59,698.23 L 501.59,705.17 L 498.16,708.15 L 494.73,708.15 M 471.25,715.23 L 468.96,713.25 L 465.54,713.25 L 463.25,715.23 L 463.25,723.17 L 465.54,725.15 L 468.96,725.15 L 471.25,723.17 M 474.92,714.74 L 476.63,713.25 L 481.21,713.25 L 482.92,714.74 L 482.92,717.71 L 481.21,719.20 L 477.78,719.20 M 481.21,719.20 L 482.92,720.69 L 482.92,723.66 L 481.21,725.15 L 476.63,725.15 L 474.92,723.66 M 486.59,715.23 L 488.88,713.25 L 492.30,713.25 L 494.59,715.23 L 494.59,717.71 L 486.59,725.15 L 494.59,725.15 M 466.25,744.23 L 463.96,742.25 L 460.54,742.25 L 458.25,744.23 L 458.25,752.17 L 460.54,754.15 L 463.96,754.15 L 466.25,752.17 M 469.92,743.74 L 471.63,742.25 L 476.21,742.25 L 477.92,743.74 L 477.92,746.71 L 476.21,748.20 L 472.78,748.20 M 476.21,748.20 L 477.92,749.69 L 477.92,752.66 L 476.21,754.15 L 471.63,754.15 L 469.92,752.66 M 519.25,736.23 L 516.96,734.25 L 513.54,734.25 L 511.25,736.23 L 511.25,744.17 L 513.54,746.15 L 516.96,746.15 L 519.25,744.17 M 528.18,746.15 L 528.18,734.25 L 522.92,742.38 L 529.89,742.38 M 541.45,734.25 L 538.02,734.25 L 534.59,737.23 L 534.59,744.17 L 536.88,746.15 L 540.30,746.15 L 542.59,744.17 L 542.59,741.69 L 540.30,739.70 L 534.59,739.70 M 591.25,685.23 L 588.96,683.25 L 585.54,683.25 L 583.25,685.23 L 583.25,693.17 L 585.54,695.15 L 588.96,695.15 L 591.25,693.17 M 596.41,685.23 L 599.15,683.25 L 599.15,695.15 M 596.41,695.15 L 601.21,695.15 M 606.59,685.23 L 608.88,683.25 L 612.30,683.25 L 614.59,685.23 L 614.59,687.71 L 606.59,695.15 L 614.59,695.15 M 618.26,685.23 L 620.55,683.25 L 623.97,683.25 L 626.26,685.23 L 626.26,687.71 L 618.26,695.15 L 626.26,695.15 M 571.25,717.23 L 568.96,715.25 L 565.54,715.25 L 563.25,717.23 L 563.25,725.17 L 565.54,727.15 L 568.96,727.15 L 571.25,725.17 M 576.41,717.23 L 579.15,715.25 L 579.15,727.15 M 576.41,727.15 L 581.21,727.15 M 591.85,727.15 L 591.85,715.25 L 586.59,723.38 L 593.56,723.38 M 598.26,716.74 L 599.97,715.25 L 604.55,715.25 L 606.26,716.74 L 606.26,719.71 L 604.55,721.20 L 601.12,721.20 M 604.55,721.20 L 606.26,722.69 L 606.26,725.66 L 604.55,727.15 L 599.97,727.15 L 598.26,725.66 M 151.25,680.25 L 159.25,680.25 M 155.25,680.25 L 155.25,692.15 M 162.92,692.15 L 162.92,680.25 L 168.63,680.25 L 170.92,682.23 L 170.92,684.22 L 168.63,686.20 L 162.92,686.20 M 174.59,682.23 L 176.88,680.25 L 180.30,680.25 L 182.59,682.23 L 182.59,684.71 L 174.59,692.15 L 182.59,692.15 M 187.75,682.23 L 190.49,680.25 L 190.49,692.15 M 187.75,692.15 L 192.55,692.15 M 150.25,706.25 L 158.25,706.25 M 154.25,706.25 L 154.25,718.15 M 161.92,718.15 L 161.92,706.25 L 167.63,706.25 L 169.92,708.23 L 169.92,710.22 L 167.63,712.20 L 161.92,712.20 M 175.08,708.23 L 177.82,706.25 L 177.82,718.15 M 175.08,718.15 L 179.88,718.15 M 144.25,729.25 L 152.25,729.25 M 148.25,729.25 L 148.25,741.15 M 155.92,741.15 L 155.92,729.25 L 161.63,729.25 L 163.92,731.23 L 163.92,733.22 L 161.63,735.20 L 155.92,735.20 M 167.59,731.23 L 169.88,729.25 L 173.30,729.25 L 175.59,731.23 L 175.59,733.71 L 167.59,741.15 L 175.59,741.15 M 155.25,749.23 L 152.96,747.25 L 149.54,747.25 L 147.25,749.23 L 147.25,757.17 L 149.54,759.15 L 152.96,759.15 L 155.25,757.17 M 166.92,753.70 L 161.21,753.70 L 158.92,751.71 L 158.92,749.23 L 161.21,747.25 L 164.63,747.25 L 166.92,749.23 L 166.92,756.17 L 163.49,759.15 L 160.06,759.15 M 229.25,731.23 L 226.96,729.25 L 223.54,729.25 L 221.25,731.23 L 221.25,739.17 L 223.54,741.15 L 226.96,741.15 L 229.25,739.17 M 238.18,741.15 L 238.18,729.25 L 232.92,737.38 L 239.89,737.38 M 246.88,729.25 L 250.30,729.25 L 252.59,731.23 L 252.59,733.22 L 250.30,735.20 L 246.88,735.20 L 244.59,733.22 L 244.59,731.23 Z M 246.88,735.20 L 244.59,737.18 L 244.59,739.17 L 246.88,741.15 L 250.30,741.15 L 252.59,739.17 L 252.59,737.18 L 250.30,735.20 M 275.25,668.23 L 272.96,666.25 L 269.54,666.25 L 267.25,668.23 L 267.25,676.17 L 269.54,678.15 L 272.96,678.15 L 275.25,676.17 M 278.92,666.25 L 286.92,666.25 L 286.92,668.23 L 281.78,678.15 M 354.25,760.23 L 351.96,758.25 L 348.54,758.25 L 346.25,760.23 L 346.25,768.17 L 348.54,770.15 L 351.96,770.15 L 354.25,768.17 M 359.41,760.23 L 362.15,758.25 L 362.15,770.15 M 359.41,770.15 L 364.21,770.15 M 369.59,760.23 L 371.88,758.25 L 375.30,758.25 L 377.59,760.23 L 377.59,762.71 L 369.59,770.15 L 377.59,770.15 M 241.25,676.23 L 238.96,674.25 L 235.54,674.25 L 233.25,676.23 L 233.25,684.17 L 235.54,686.15 L 238.96,686.15 L 241.25,684.17 M 246.41,676.23 L 249.15,674.25 L 249.15,686.15 M 246.41,686.15 L 251.21,686.15 M 327.25,729.23 L 324.96,727.25 L 321.54,727.25 L 319.25,729.23 L 319.25,737.17 L 321.54,739.15 L 324.96,739.15 L 327.25,737.17 M 332.41,729.23 L 335.15,727.25 L 335.15,739.15 M 332.41,739.15 L 337.21,739.15 M 342.59,728.74 L 344.30,727.25 L 348.88,727.25 L 350.59,728.74 L 350.59,731.71 L 348.88,733.20 L 345.45,733.20 M 348.88,733.20 L 350.59,734.69 L 350.59,737.66 L 348.88,739.15 L 344.30,739.15 L 342.59,737.66 M 8.51,376.15 L 8.51,364.25 L 3.25,372.38 L 10.22,372.38 M 11.25,381.25 L 3.25,381.25 L 3.25,386.21 L 8.96,386.21 L 11.25,388.19 L 11.25,391.17 L 8.96,393.15 L 5.54,393.15 L 3.25,391.17 M 10.11,397.25 L 6.68,397.25 L 3.25,400.23 L 3.25,407.17 L 5.54,409.15 L 8.96,409.15 L 11.25,407.17 L 11.25,404.69 L 8.96,402.70 L 3.25,402.70 M 146.15,354.75 L 134.25,354.75 L 134.25,349.04 L 136.23,346.75 L 138.22,346.75 L 140.20,349.04 L 140.20,354.75 M 140.20,350.75 L 146.15,346.75 M 140.70,335.08 L 140.70,340.79 L 138.71,343.08 L 136.23,343.08 L 134.25,340.79 L 134.25,337.37 L 136.23,335.08 L 143.18,335.08 L 146.15,338.51 L 146.15,341.94 M 134.25,329.12 L 134.25,325.70 L 136.23,323.41 L 138.22,323.41 L 140.20,325.70 L 140.20,329.12 L 138.22,331.41 L 136.23,331.41 Z M 140.20,329.12 L 142.18,331.41 L 144.17,331.41 L 146.15,329.12 L 146.15,325.70 L 144.17,323.41 L 142.18,323.41 L 140.20,325.70 M 150.15,408.75 L 138.25,408.75 L 138.25,403.04 L 140.23,400.75 L 142.22,400.75 L 144.20,403.04 L 144.20,408.75 M 144.20,404.75 L 150.15,400.75 M 140.23,395.59 L 138.25,392.85 L 150.15,392.85 M 150.15,395.59 L 150.15,390.79 M 140.23,385.41 L 138.25,383.12 L 138.25,379.70 L 140.23,377.41 L 142.71,377.41 L 150.15,385.41 L 150.15,377.41 M 140.23,373.74 L 138.25,371.45 L 138.25,368.03 L 140.23,365.74 L 142.71,365.74 L 150.15,373.74 L 150.15,365.74 M 121.15,425.75 L 109.25,425.75 L 109.25,420.04 L 111.23,417.75 L 113.22,417.75 L 115.20,420.04 L 115.20,425.75 M 115.20,421.75 L 121.15,417.75 M 111.23,412.59 L 109.25,409.85 L 121.15,409.85 M 121.15,412.59 L 121.15,407.79 M 153.15,471.75 L 141.25,471.75 L 141.25,466.04 L 143.23,463.75 L 145.22,463.75 L 147.20,466.04 L 147.20,471.75 M 147.20,467.75 L 153.15,463.75 M 143.23,458.59 L 141.25,455.85 L 153.15,455.85 M 153.15,458.59 L 153.15,453.79 M 153.15,443.15 L 141.25,443.15 L 149.38,448.41 L 149.38,441.44 M 141.25,434.45 L 141.25,431.03 L 143.23,428.74 L 151.17,428.74 L 153.15,431.03 L 153.15,434.45 L 151.17,436.74 L 143.23,436.74 Z M 138.15,471.75 L 126.25,471.75 L 126.25,466.04 L 128.23,463.75 L 130.22,463.75 L 132.20,466.04 L 132.20,471.75 M 132.20,467.75 L 138.15,463.75 M 128.23,460.08 L 126.25,457.79 L 126.25,454.37 L 128.23,452.08 L 130.71,452.08 L 138.15,460.08 L 138.15,452.08 M 128.23,446.92 L 126.25,444.18 L 138.15,444.18 M 138.15,446.92 L 138.15,442.12 M 61.15,492.75 L 49.25,492.75 L 49.25,487.04 L 51.23,484.75 L 53.22,484.75 L 55.20,487.04 L 55.20,492.75 M 55.20,488.75 L 61.15,484.75 M 51.23,479.59 L 49.25,476.85 L 61.15,476.85 M 61.15,479.59 L 61.15,474.79 M 61.15,464.15 L 49.25,464.15 L 57.38,469.41 L 57.38,462.44 M 49.25,449.74 L 49.25,457.74 L 54.21,457.74 L 54.21,452.03 L 56.19,449.74 L 59.17,449.74 L 61.15,452.03 L 61.15,455.45 L 59.17,457.74 M 79.15,492.75 L 67.25,492.75 L 67.25,487.04 L 69.23,484.75 L 71.22,484.75 L 73.20,487.04 L 73.20,492.75 M 73.20,488.75 L 79.15,484.75 M 69.23,479.59 L 67.25,476.85 L 79.15,476.85 M 79.15,479.59 L 79.15,474.79 M 79.15,464.15 L 67.25,464.15 L 75.38,469.41 L 75.38,462.44 M 67.25,455.45 L 67.25,452.03 L 69.23,449.74 L 71.22,449.74 L 73.20,452.03 L 73.20,455.45 L 71.22,457.74 L 69.23,457.74 Z M 73.20,455.45 L 75.18,457.74 L 77.17,457.74 L 79.15,455.45 L 79.15,452.03 L 77.17,449.74 L 75.18,449.74 L 73.20,452.03 M 95.15,477.75 L 83.25,477.75 L 83.25,472.04 L 85.23,469.75 L 87.22,469.75 L 89.20,472.04 L 89.20,477.75 M 89.20,473.75 L 95.15,469.75 M 84.74,466.08 L 83.25,464.37 L 83.25,459.79 L 84.74,458.08 L 87.71,458.08 L 89.20,459.79 L 89.20,463.22 M 89.20,459.79 L 90.69,458.08 L 93.66,458.08 L 95.15,459.79 L 95.15,464.37 L 93.66,466.08 M 85.23,452.92 L 83.25,450.18 L 95.15,450.18 M 95.15,452.92 L 95.15,448.12 M 30.15,527.75 L 18.25,527.75 L 18.25,522.04 L 20.23,519.75 L 22.22,519.75 L 24.20,522.04 L 24.20,527.75 M 24.20,523.75 L 30.15,519.75 M 20.23,514.59 L 18.25,511.85 L 30.15,511.85 M 30.15,514.59 L 30.15,509.79 M 18.25,496.41 L 18.25,504.41 L 23.21,504.41 L 23.21,498.70 L 25.19,496.41 L 28.17,496.41 L 30.15,498.70 L 30.15,502.12 L 28.17,504.41 M 49.15,538.75 L 37.25,538.75 L 37.25,533.04 L 39.23,530.75 L 41.22,530.75 L 43.20,533.04 L 43.20,538.75 M 43.20,534.75 L 49.15,530.75 M 39.23,525.59 L 37.25,522.85 L 49.15,522.85 M 49.15,525.59 L 49.15,520.79 M 38.74,515.41 L 37.25,513.70 L 37.25,509.12 L 38.74,507.41 L 41.71,507.41 L 43.20,509.12 L 43.20,512.55 M 43.20,509.12 L 44.69,507.41 L 47.66,507.41 L 49.15,509.12 L 49.15,513.70 L 47.66,515.41 M 37.25,503.74 L 37.25,495.74 L 39.23,495.74 L 49.15,500.88 M 166.15,515.75 L 154.25,515.75 L 154.25,510.04 L 156.23,507.75 L 158.22,507.75 L 160.20,510.04 L 160.20,515.75 M 160.20,511.75 L 166.15,507.75 M 154.25,497.22 L 154.25,500.65 L 157.22,504.08 L 164.17,504.08 L 166.15,501.79 L 166.15,498.37 L 164.17,496.08 L 161.69,496.08 L 159.70,498.37 L 159.70,504.08 M 154.25,485.55 L 154.25,488.98 L 157.22,492.41 L 164.17,492.41 L 166.15,490.12 L 166.15,486.70 L 164.17,484.41 L 161.69,484.41 L 159.70,486.70 L 159.70,492.41 M 193.15,512.75 L 181.25,512.75 L 181.25,507.04 L 183.23,504.75 L 185.22,504.75 L 187.20,507.04 L 187.20,512.75 M 187.20,508.75 L 193.15,504.75 M 182.74,501.08 L 181.25,499.37 L 181.25,494.79 L 182.74,493.08 L 185.71,493.08 L 187.20,494.79 L 187.20,498.22 M 187.20,494.79 L 188.69,493.08 L 191.66,493.08 L 193.15,494.79 L 193.15,499.37 L 191.66,501.08 M 181.25,489.41 L 181.25,481.41 L 183.23,481.41 L 193.15,486.55 M 272.15,513.75 L 260.25,513.75 L 260.25,508.04 L 262.23,505.75 L 264.22,505.75 L 266.20,508.04 L 266.20,513.75 M 266.20,509.75 L 272.15,505.75 M 261.74,502.08 L 260.25,500.37 L 260.25,495.79 L 261.74,494.08 L 264.71,494.08 L 266.20,495.79 L 266.20,499.22 M 266.20,495.79 L 267.69,494.08 L 270.66,494.08 L 272.15,495.79 L 272.15,500.37 L 270.66,502.08 M 260.25,483.55 L 260.25,486.98 L 263.23,490.41 L 270.17,490.41 L 272.15,488.12 L 272.15,484.70 L 270.17,482.41 L 267.69,482.41 L 265.70,484.70 L 265.70,490.41 M 280.23,566.75 L 278.25,569.04 L 278.25,572.46 L 280.23,574.75 L 288.17,574.75 L 290.15,572.46 L 290.15,569.04 L 288.17,566.75 M 278.25,555.08 L 278.25,563.08 L 283.21,563.08 L 283.21,557.37 L 285.19,555.08 L 288.17,555.08 L 290.15,557.37 L 290.15,560.79 L 288.17,563.08 M 280.23,551.41 L 278.25,549.12 L 278.25,545.70 L 280.23,543.41 L 282.71,543.41 L 290.15,551.41 L 290.15,543.41 M 312.23,556.75 L 310.25,559.04 L 310.25,562.46 L 312.23,564.75 L 320.17,564.75 L 322.15,562.46 L 322.15,559.04 L 320.17,556.75 M 310.25,546.22 L 310.25,549.65 L 313.23,553.08 L 320.17,553.08 L 322.15,550.79 L 322.15,547.37 L 320.17,545.08 L 317.69,545.08 L 315.70,547.37 L 315.70,553.08 M 429.23,365.75 L 427.25,368.04 L 427.25,371.46 L 429.23,373.75 L 437.17,373.75 L 439.15,371.46 L 439.15,368.04 L 437.17,365.75 M 429.23,360.59 L 427.25,357.85 L 439.15,357.85 M 439.15,360.59 L 439.15,355.79 M 428.74,350.41 L 427.25,348.70 L 427.25,344.12 L 428.74,342.41 L 431.71,342.41 L 433.20,344.12 L 433.20,347.55 M 433.20,344.12 L 434.69,342.41 L 437.66,342.41 L 439.15,344.12 L 439.15,348.70 L 437.66,350.41 M 427.25,331.88 L 427.25,335.31 L 430.23,338.74 L 437.17,338.74 L 439.15,336.45 L 439.15,333.03 L 437.17,330.74 L 434.69,330.74 L 432.70,333.03 L 432.70,338.74 M 429.23,418.75 L 427.25,421.04 L 427.25,424.46 L 429.23,426.75 L 437.17,426.75 L 439.15,424.46 L 439.15,421.04 L 437.17,418.75 M 429.23,413.59 L 427.25,410.85 L 439.15,410.85 M 439.15,413.59 L 439.15,408.79 M 428.74,403.41 L 427.25,401.70 L 427.25,397.12 L 428.74,395.41 L 431.71,395.41 L 433.20,397.12 L 433.20,400.55 M 433.20,397.12 L 434.69,395.41 L 437.66,395.41 L 439.15,397.12 L 439.15,401.70 L 437.66,403.41 M 427.25,389.45 L 427.25,386.03 L 429.23,383.74 L 431.22,383.74 L 433.20,386.03 L 433.20,389.45 L 431.22,391.74 L 429.23,391.74 Z M 433.20,389.45 L 435.18,391.74 L 437.17,391.74 L 439.15,389.45 L 439.15,386.03 L 437.17,383.74 L 435.18,383.74 L 433.20,386.03 M 429.23,468.75 L 427.25,471.04 L 427.25,474.46 L 429.23,476.75 L 437.17,476.75 L 439.15,474.46 L 439.15,471.04 L 437.17,468.75 M 429.23,463.59 L 427.25,460.85 L 439.15,460.85 M 439.15,463.59 L 439.15,458.79 M 428.74,453.41 L 427.25,451.70 L 427.25,447.12 L 428.74,445.41 L 431.71,445.41 L 433.20,447.12 L 433.20,450.55 M 433.20,447.12 L 434.69,445.41 L 437.66,445.41 L 439.15,447.12 L 439.15,451.70 L 437.66,453.41 M 427.25,433.74 L 427.25,441.74 L 432.21,441.74 L 432.21,436.03 L 434.19,433.74 L 437.17,433.74 L 439.15,436.03 L 439.15,439.45 L 437.17,441.74 M 500.23,401.75 L 498.25,404.04 L 498.25,407.46 L 500.23,409.75 L 508.17,409.75 L 510.15,407.46 L 510.15,404.04 L 508.17,401.75 M 500.23,396.26 L 498.25,393.52 L 510.15,393.52 M 510.15,396.26 L 510.15,391.46 M 499.74,385.75 L 498.25,384.04 L 498.25,379.46 L 499.74,377.75 L 502.71,377.75 L 504.20,379.46 L 504.20,382.89 M 504.20,379.46 L 505.69,377.75 L 508.66,377.75 L 510.15,379.46 L 510.15,384.04 L 508.66,385.75 M 498.25,373.75 L 498.25,365.75 L 500.23,365.75 L 510.15,370.89 M 500.23,353.75 L 498.25,356.04 L 498.25,359.46 L 500.23,361.75 L 508.17,361.75 L 510.15,359.46 L 510.15,356.04 L 508.17,353.75 M 500.23,348.26 L 498.25,345.52 L 510.15,345.52 M 510.15,348.26 L 510.15,343.46 M 510.15,332.49 L 498.25,332.49 L 506.38,337.75 L 506.38,330.78 M 500.23,325.75 L 498.25,323.46 L 498.25,320.04 L 500.23,317.75 L 502.71,317.75 L 510.15,325.75 L 510.15,317.75 M 617.23,280.75 L 615.25,283.04 L 615.25,286.46 L 617.23,288.75 L 625.17,288.75 L 627.15,286.46 L 627.15,283.04 L 625.17,280.75 M 617.23,277.08 L 615.25,274.79 L 615.25,271.37 L 617.23,269.08 L 619.71,269.08 L 627.15,277.08 L 627.15,269.08 M 617.23,263.92 L 615.25,261.18 L 627.15,261.18 M 627.15,263.92 L 627.15,259.12 M 599.23,366.75 L 597.25,369.04 L 597.25,372.46 L 599.23,374.75 L 607.17,374.75 L 609.15,372.46 L 609.15,369.04 L 607.17,366.75 M 599.23,363.08 L 597.25,360.79 L 597.25,357.37 L 599.23,355.08 L 601.71,355.08 L 609.15,363.08 L 609.15,355.08 M 599.23,351.41 L 597.25,349.12 L 597.25,345.70 L 599.23,343.41 L 601.71,343.41 L 609.15,351.41 L 609.15,343.41 M 660.23,480.75 L 658.25,483.04 L 658.25,486.46 L 660.23,488.75 L 668.17,488.75 L 670.15,486.46 L 670.15,483.04 L 668.17,480.75 M 660.23,477.08 L 658.25,474.79 L 658.25,471.37 L 660.23,469.08 L 662.71,469.08 L 670.15,477.08 L 670.15,469.08 M 658.25,458.55 L 658.25,461.98 L 661.23,465.41 L 668.17,465.41 L 670.15,463.12 L 670.15,459.70 L 668.17,457.41 L 665.69,457.41 L 663.70,459.70 L 663.70,465.41 M 43.15,613.75 L 31.25,613.75 L 31.25,608.04 L 33.23,605.75 L 35.22,605.75 L 37.20,608.04 L 37.20,613.75 M 37.20,609.75 L 43.15,605.75 M 43.15,596.82 L 31.25,596.82 L 39.38,602.08 L 39.38,595.11 M 37.70,582.41 L 37.70,588.12 L 35.71,590.41 L 33.23,590.41 L 31.25,588.12 L 31.25,584.70 L 33.23,582.41 L 40.17,582.41 L 43.15,585.84 L 43.15,589.27 M 63.15,613.75 L 51.25,613.75 L 51.25,608.04 L 53.23,605.75 L 55.22,605.75 L 57.20,608.04 L 57.20,613.75 M 57.20,609.75 L 63.15,605.75 M 51.25,594.08 L 51.25,602.08 L 56.21,602.08 L 56.21,596.37 L 58.19,594.08 L 61.17,594.08 L 63.15,596.37 L 63.15,599.79 L 61.17,602.08 M 51.25,588.12 L 51.25,584.70 L 53.23,582.41 L 61.17,582.41 L 63.15,584.70 L 63.15,588.12 L 61.17,590.41 L 53.23,590.41 Z M 26.23,671.75 L 24.25,674.04 L 24.25,677.46 L 26.23,679.75 L 34.17,679.75 L 36.15,677.46 L 36.15,674.04 L 34.17,671.75 M 24.25,668.08 L 24.25,660.08 L 26.23,660.08 L 36.15,665.22 M 24.25,654.12 L 24.25,650.70 L 26.23,648.41 L 28.22,648.41 L 30.20,650.70 L 30.20,654.12 L 28.22,656.41 L 26.23,656.41 Z M 30.20,654.12 L 32.18,656.41 L 34.17,656.41 L 36.15,654.12 L 36.15,650.70 L 34.17,648.41 L 32.18,648.41 L 30.20,650.70 M 54.23,678.75 L 52.25,681.04 L 52.25,684.46 L 54.23,686.75 L 62.17,686.75 L 64.15,684.46 L 64.15,681.04 L 62.17,678.75 M 52.25,675.08 L 52.25,667.08 L 54.23,667.08 L 64.15,672.22 M 52.25,663.41 L 52.25,655.41 L 54.23,655.41 L 64.15,660.55 M 96.15,679.75 L 84.25,679.75 L 84.25,674.04 L 86.23,671.75 L 88.22,671.75 L 90.20,674.04 L 90.20,679.75 M 90.20,675.75 L 96.15,671.75 M 86.23,668.08 L 84.25,665.79 L 84.25,662.37 L 86.23,660.08 L 88.71,660.08 L 96.15,668.08 L 96.15,660.08 M 117.15,698.75 L 105.25,698.75 L 105.25,693.04 L 107.23,690.75 L 109.22,690.75 L 111.20,693.04 L 111.20,698.75 M 111.20,694.75 L 117.15,690.75 M 107.23,687.08 L 105.25,684.79 L 105.25,681.37 L 107.23,679.08 L 109.71,679.08 L 117.15,687.08 L 117.15,679.08 M 111.70,667.41 L 111.70,673.12 L 109.71,675.41 L 107.23,675.41 L 105.25,673.12 L 105.25,669.70 L 107.23,667.41 L 114.17,667.41 L 117.15,670.84 L 117.15,674.27 M 187.23,658.75 L 185.25,661.04 L 185.25,664.46 L 187.23,666.75 L 195.17,666.75 L 197.15,664.46 L 197.15,661.04 L 195.17,658.75 M 197.15,649.82 L 185.25,649.82 L 193.38,655.08 L 193.38,648.11 M 191.70,635.41 L 191.70,641.12 L 189.71,643.41 L 187.23,643.41 L 185.25,641.12 L 185.25,637.70 L 187.23,635.41 L 194.18,635.41 L 197.15,638.84 L 197.15,642.27 M 199.23,704.75 L 197.25,707.04 L 197.25,710.46 L 199.23,712.75 L 207.17,712.75 L 209.15,710.46 L 209.15,707.04 L 207.17,704.75 M 198.74,701.08 L 197.25,699.37 L 197.25,694.79 L 198.74,693.08 L 201.71,693.08 L 203.20,694.79 L 203.20,698.22 M 203.20,694.79 L 204.69,693.08 L 207.66,693.08 L 209.15,694.79 L 209.15,699.37 L 207.66,701.08 M 197.25,687.12 L 197.25,683.70 L 199.23,681.41 L 201.22,681.41 L 203.20,683.70 L 203.20,687.12 L 201.22,689.41 L 199.23,689.41 Z M 203.20,687.12 L 205.18,689.41 L 207.17,689.41 L 209.15,687.12 L 209.15,683.70 L 207.17,681.41 L 205.18,681.41 L 203.20,683.70 M 71.23,744.75 L 69.25,747.04 L 69.25,750.46 L 71.23,752.75 L 79.17,752.75 L 81.15,750.46 L 81.15,747.04 L 79.17,744.75 M 69.25,738.79 L 69.25,735.37 L 71.23,733.08 L 73.22,733.08 L 75.20,735.37 L 75.20,738.79 L 73.22,741.08 L 71.23,741.08 Z M 75.20,738.79 L 77.18,741.08 L 79.17,741.08 L 81.15,738.79 L 81.15,735.37 L 79.17,733.08 L 77.18,733.08 L 75.20,735.37 M 69.25,727.12 L 69.25,723.70 L 71.23,721.41 L 79.17,721.41 L 81.15,723.70 L 81.15,727.12 L 79.17,729.41 L 71.23,729.41 Z M 297.23,751.75 L 295.25,754.04 L 295.25,757.46 L 297.23,759.75 L 305.17,759.75 L 307.15,757.46 L 307.15,754.04 L 305.17,751.75 M 296.74,748.08 L 295.25,746.37 L 295.25,741.79 L 296.74,740.08 L 299.71,740.08 L 301.20,741.79 L 301.20,745.22 M 301.20,741.79 L 302.69,740.08 L 305.66,740.08 L 307.15,741.79 L 307.15,746.37 L 305.66,748.08 M 301.70,728.41 L 301.70,734.12 L 299.71,736.41 L 297.23,736.41 L 295.25,734.12 L 295.25,730.70 L 297.23,728.41 L 304.18,728.41 L 307.15,731.84 L 307.15,735.27 M 391.23,759.26 L 389.25,756.52 L 401.15,756.52 M 401.15,759.26 L 401.15,754.46 M 391.23,747.59 L 389.25,744.85 L 401.15,744.85 M 401.15,747.59 L 401.15,742.79" stroke="#868400" stroke-width="2.5"/>
<path d="M386.5,122.5 L448.5,122.5 L448.5,150.5 L386.5,150.5 Z M594.5,83.5 L657.5,83.5 L657.5,113.5 L594.5,113.5 Z M53.5,303.5 L70.5,303.5 L70.5,372.5 L53.5,372.5 Z M202.5,542.5 L264.5,542.5 L264.5,571.5 L202.5,571.5 Z M170.5,564.5 L199.5,564.5 L199.5,627.5 L170.5,627.5 Z M211.5,631.5 L274.5,631.5 L274.5,660.5 L211.5,660.5 Z M512.5,672.5 L575.5,672.5 L575.5,701.5 L512.5,701.5 Z M495.5,751.5 L555.5,751.5 L555.5,787.5 L495.5,787.5 Z M-17.5,648.5 L9.5,648.5 L9.5,678.5 L-17.5,678.5 Z M-17.5,686.5 L10.5,686.5 L10.5,749.5 L-17.5,749.5 Z M14.5,686.5 L44.5,686.5 L44.5,749.5 L14.5,749.5 Z" stroke="#868400" stroke-width="5" stroke-linecap="square" stroke-linejoin="miter"/>
<line x1="241" y1="20.5" x2="384" y2="20.5" stroke="#868400" stroke-width="5"/>
<line x1="231" y1="42" x2="231" y2="64" stroke="#868400" stroke-width="5"/>
<line x1="393" y1="42" x2="393" y2="64" stroke="#868400" stroke-width="5"/>
<line x1="310" y1="86" x2="351" y2="86" stroke="#868400" stroke-width="5"/>
<line x1="63" y1="91" x2="175" y2="91" stroke="#868400" stroke-width="3.5"/>
<line x1="1.5" y1="159" x2="1.5" y2="169" stroke="#868400" stroke-width="5"/>
<line x1="79" y1="375" x2="102" y2="375" stroke="#868400" stroke-width="5"/>
<line x1="118" y1="339" x2="127" y2="339" stroke="#868400" stroke-width="5"/>
<line x1="153" y1="540" x2="162" y2="540" stroke="#868400" stroke-width="5"/>
<line x1="180" y1="537" x2="190" y2="537" stroke="#868400" stroke-width="5"/>
<line x1="229" y1="506" x2="229" y2="514" stroke="#868400" stroke-width="5"/>
<line x1="116" y1="565" x2="116" y2="574" stroke="#868400" stroke-width="5"/>
<line x1="139" y1="603" x2="139" y2="612" stroke="#868400" stroke-width="5"/>
<line x1="139" y1="628" x2="139" y2="638" stroke="#868400" stroke-width="5"/>
<line x1="279" y1="497" x2="288" y2="497" stroke="#868400" stroke-width="5"/>
<line x1="325.5" y1="488" x2="325.5" y2="498" stroke="#868400" stroke-width="5"/>
<line x1="312" y1="590" x2="322" y2="590" stroke="#868400" stroke-width="5"/>
<line x1="279" y1="601" x2="289" y2="601" stroke="#868400" stroke-width="5"/>
<line x1="294" y1="650" x2="304" y2="650" stroke="#868400" stroke-width="5"/>
<line x1="327" y1="661" x2="336" y2="661" stroke="#868400" stroke-width="5"/>
<line x1="358" y1="676" x2="368" y2="676" stroke="#868400" stroke-width="5"/>
<line x1="389" y1="676" x2="399" y2="676" stroke="#868400" stroke-width="5"/>
<line x1="369.5" y1="616" x2="369.5" y2="626" stroke="#868400" stroke-width="5"/>
<line x1="420" y1="617" x2="420" y2="626" stroke="#868400" stroke-width="5"/>
<line x1="464" y1="599" x2="464" y2="608" stroke="#868400" stroke-width="5"/>
<line x1="434" y1="648" x2="434" y2="658" stroke="#868400" stroke-width="5"/>
<line x1="434" y1="679" x2="434" y2="689" stroke="#868400" stroke-width="5"/>
<line x1="439" y1="712" x2="439" y2="722" stroke="#868400" stroke-width="5"/>
<line x1="434" y1="742" x2="434" y2="752" stroke="#868400" stroke-width="5"/>
<line x1="479" y1="682" x2="479" y2="690" stroke="#868400" stroke-width="5"/>
<line x1="537" y1="718" x2="537" y2="728" stroke="#868400" stroke-width="5"/>
<line x1="258.5" y1="692" x2="258.5" y2="705" stroke="#868400" stroke-width="5"/>
<line x1="258.5" y1="711" x2="258.5" y2="722" stroke="#868400" stroke-width="5"/>
<line x1="295" y1="703" x2="305" y2="703" stroke="#868400" stroke-width="5"/>
<line x1="338" y1="711" x2="338" y2="722" stroke="#868400" stroke-width="5"/>
<line x1="389" y1="723.5" x2="399" y2="723.5" stroke="#868400" stroke-width="5"/>
<line x1="264" y1="751" x2="274" y2="751" stroke="#868400" stroke-width="5"/>
<line x1="356" y1="743" x2="356" y2="752" stroke="#868400" stroke-width="5"/>
<line x1="217" y1="697.5" x2="226" y2="697.5" stroke="#868400" stroke-width="5"/>
<line x1="54" y1="710.5" x2="63" y2="710.5" stroke="#868400" stroke-width="5"/>
<line x1="56.5" y1="757" x2="56.5" y2="765" stroke="#868400" stroke-width="5"/>
<line x1="432" y1="163" x2="432" y2="173" stroke="#868400" stroke-width="5"/>
<line x1="426" y1="206" x2="426" y2="215" stroke="#868400" stroke-width="5"/>
<line x1="626" y1="122" x2="626" y2="131" stroke="#868400" stroke-width="5"/>
<line x1="667" y1="168" x2="667" y2="178" stroke="#868400" stroke-width="5"/>
<line x1="630" y1="233" x2="630" y2="243" stroke="#868400" stroke-width="5"/>
<line x1="635" y1="273" x2="644" y2="273" stroke="#868400" stroke-width="5"/>
<line x1="446" y1="351" x2="455" y2="351" stroke="#868400" stroke-width="5"/>
<line x1="446" y1="405" x2="455" y2="405" stroke="#868400" stroke-width="5"/>
<line x1="446" y1="455" x2="455" y2="455" stroke="#868400" stroke-width="5"/>
<line x1="481" y1="338" x2="491" y2="338" stroke="#868400" stroke-width="5"/>
<line x1="481" y1="390" x2="491" y2="390" stroke="#868400" stroke-width="5"/>
<line x1="494" y1="418" x2="494" y2="427" stroke="#868400" stroke-width="5"/>
<line x1="615" y1="355" x2="625" y2="355" stroke="#868400" stroke-width="5"/>
<line x1="626" y1="413" x2="626" y2="423" stroke="#868400" stroke-width="5"/>
<line x1="626" y1="446" x2="626" y2="456" stroke="#868400" stroke-width="5"/>
<line x1="667" y1="366" x2="667" y2="376" stroke="#868400" stroke-width="5"/>
<line x1="667" y1="389" x2="667" y2="399" stroke="#868400" stroke-width="5"/>
<line x1="659" y1="432" x2="668" y2="432" stroke="#868400" stroke-width="5"/>
<rect x="0" y="42" width="2" height="5" fill="#868400"/>
<rect x="0" y="52" width="2" height="6" fill="#868400"/>
<rect x="0" y="62" width="2" height="2" fill="#868400"/>
<rect x="0" y="70" width="2" height="2" fill="#868400"/>
</g>
</svg>
<div id="frameR"></div><div id="frameR2"></div><div style="position:absolute;left:714px;top:0;width:1px;height:762px;background:#7d7978"></div>
<svg width="10" height="60" viewBox="702 705 10 60" style="position:absolute;left:702px;top:705px"><path d="M 698.25,750.75 L 710.15,750.75 M 698.25,742.75 L 710.15,742.75 M 704.20,750.75 L 704.20,742.75 M 700.23,739.08 L 698.25,736.79 L 698.25,733.37 L 700.23,731.08 L 702.71,731.08 L 710.15,739.08 L 710.15,731.08 M 704.70,726.84 L 704.70,719.98 M 701.72,723.41 L 707.67,723.41" fill="none" stroke="#3a3a3a" stroke-width="1.6"/></svg>
<svg width="714" height="13" style="position:absolute;left:0;top:0">
<defs><pattern id="hatch" width="7" height="7" patternUnits="userSpaceOnUse" patternTransform="translate(0,3)"><path d="M0,0 L7,7 M-1,6 L1,8 M6,-1 L8,1" stroke="#4a4a4a" stroke-width="1"/></pattern></defs>
<rect x="0" y="0" width="714" height="13" fill="#000"/>
<rect x="0" y="0" width="440" height="1.5" fill="#7a7a7a"/>
<rect x="45" y="0" width="1" height="1.5" fill="#333"/>
<rect x="52" y="0" width="1" height="1.5" fill="#333"/>
<rect x="59" y="0" width="1" height="1.5" fill="#333"/>
<rect x="66" y="0" width="1" height="1.5" fill="#333"/>
<rect x="73" y="0" width="1" height="1.5" fill="#333"/>
<rect x="80" y="0" width="1" height="1.5" fill="#333"/>
<rect x="87" y="0" width="1" height="1.5" fill="#333"/>
<rect x="94" y="0" width="1" height="1.5" fill="#333"/>
<rect x="101" y="0" width="1" height="1.5" fill="#333"/>
<rect x="108" y="0" width="1" height="1.5" fill="#333"/>
<rect x="115" y="0" width="1" height="1.5" fill="#333"/>
<rect x="122" y="0" width="1" height="1.5" fill="#333"/>
<rect x="129" y="0" width="1" height="1.5" fill="#333"/>
<rect x="136" y="0" width="1" height="1.5" fill="#333"/>
<rect x="143" y="0" width="1" height="1.5" fill="#333"/>
<rect x="150" y="0" width="1" height="1.5" fill="#333"/>
<rect x="157" y="0" width="1" height="1.5" fill="#333"/>
<rect x="164" y="0" width="1" height="1.5" fill="#333"/>
<rect x="171" y="0" width="1" height="1.5" fill="#333"/>
<rect x="178" y="0" width="1" height="1.5" fill="#333"/>
<rect x="185" y="0" width="1" height="1.5" fill="#333"/>
<rect x="192" y="0" width="1" height="1.5" fill="#333"/>
<rect x="199" y="0" width="1" height="1.5" fill="#333"/>
<rect x="206" y="0" width="1" height="1.5" fill="#333"/>
<rect x="213" y="0" width="1" height="1.5" fill="#333"/>
<rect x="220" y="0" width="1" height="1.5" fill="#333"/>
<rect x="227" y="0" width="1" height="1.5" fill="#333"/>
<rect x="234" y="0" width="1" height="1.5" fill="#333"/>
<rect x="241" y="0" width="1" height="1.5" fill="#333"/>
<rect x="248" y="0" width="1" height="1.5" fill="#333"/>
<rect x="255" y="0" width="1" height="1.5" fill="#333"/>
<rect x="262" y="0" width="1" height="1.5" fill="#333"/>
<rect x="269" y="0" width="1" height="1.5" fill="#333"/>
<rect x="276" y="0" width="1" height="1.5" fill="#333"/>
<rect x="283" y="0" width="1" height="1.5" fill="#333"/>
<rect x="290" y="0" width="1" height="1.5" fill="#333"/>
<rect x="297" y="0" width="1" height="1.5" fill="#333"/>
<rect x="304" y="0" width="1" height="1.5" fill="#333"/>
<rect x="311" y="0" width="1" height="1.5" fill="#333"/>
<rect x="318" y="0" width="1" height="1.5" fill="#333"/>
<rect x="325" y="0" width="1" height="1.5" fill="#333"/>
<rect x="332" y="0" width="1" height="1.5" fill="#333"/>
<rect x="339" y="0" width="1" height="1.5" fill="#333"/>
<rect x="346" y="0" width="1" height="1.5" fill="#333"/>
<rect x="353" y="0" width="1" height="1.5" fill="#333"/>
<rect x="360" y="0" width="1" height="1.5" fill="#333"/>
<rect x="367" y="0" width="1" height="1.5" fill="#333"/>
<rect x="374" y="0" width="1" height="1.5" fill="#333"/>
<rect x="381" y="0" width="1" height="1.5" fill="#333"/>
<rect x="388" y="0" width="1" height="1.5" fill="#333"/>
<rect x="395" y="0" width="1" height="1.5" fill="#333"/>
<rect x="402" y="0" width="1" height="1.5" fill="#333"/>
<rect x="409" y="0" width="1" height="1.5" fill="#333"/>
<rect x="416" y="0" width="1" height="1.5" fill="#333"/>
<rect x="423" y="0" width="1" height="1.5" fill="#333"/>
<rect x="430" y="0" width="1" height="1.5" fill="#333"/>
<rect x="437" y="0" width="1" height="1.5" fill="#333"/>
<rect x="440" y="0" width="274" height="1" fill="#6d6968"/>
<rect x="0" y="1.5" width="714" height="1.5" fill="#383838"/>
<rect x="52" y="3" width="133" height="10" fill="url(#hatch)"/>
<rect x="220" y="3" width="91" height="10" fill="url(#hatch)"/>
<rect x="314" y="3" width="35" height="10" fill="url(#hatch)"/>
<rect x="351" y="3" width="54" height="10" fill="url(#hatch)"/>
<rect x="39" y="0" width="2.5" height="13" fill="#444"/>
<rect x="199" y="0" width="2.5" height="13" fill="#444"/>
<rect x="203" y="0" width="2.5" height="13" fill="#444"/>
<rect x="311" y="0" width="2.5" height="13" fill="#444"/>
<rect x="349" y="0" width="2.5" height="13" fill="#444"/>
<rect x="420" y="0" width="2.5" height="13" fill="#444"/>
<rect x="61" y="5" width="116" height="3" fill="#868400"/>
<rect x="92.5" y="0" width="3" height="6" fill="#868400"/>
<rect x="143" y="0" width="3" height="6" fill="#868400"/>
</svg>
<div id="hlpad"></div>
<svg width="10" height="20" style="position:absolute;left:662px;top:139px"><line x1="5" y1="4" x2="5" y2="14" stroke="#c9c78c" stroke-width="4.5" stroke-linecap="round"/></svg>
<svg width="224" height="524" viewBox="669 148 224 524" style="position:absolute;left:669px;top:148px">
<rect x="671" y="150" width="219" height="519" fill="#000" opacity="0.18"/>
<rect x="670" y="149" width="219" height="519" fill="#000" opacity="0.12"/>
<rect x="669" y="148" width="219" height="519" fill="#dadada"/>
<rect x="670" y="149" width="217" height="517" fill="#fff"/>
<rect x="671" y="150" width="22" height="516" fill="#f0f0f0"/>
<rect x="671.5" y="150.5" width="214" height="20" fill="#cce5f8" stroke="#4aa0f0" stroke-width="1"/>
<rect x="672.5" y="151.5" width="212" height="18" fill="none" stroke="#e4f1fc" stroke-width="1"/>
<rect x="700" y="215" width="187" height="2" fill="#c2c2c2"/>
<rect x="700" y="326" width="187" height="2" fill="#c2c2c2"/>
<rect x="700" y="415" width="187" height="2" fill="#c2c2c2"/>
<rect x="700" y="505" width="187" height="2" fill="#c2c2c2"/>
<rect x="700" y="551" width="187" height="2" fill="#c2c2c2"/>
<rect x="700" y="621" width="187" height="2" fill="#c2c2c2"/>
<g transform="translate(676,156)">
   <path d="M0,0.5 L9,0.5 L5.5,4.5 L5.5,9.5 L3.5,9.5 L3.5,4.5 Z" fill="#f4f6f8" stroke="#8a96a6" stroke-width="0.8"/>
   <path d="M5.5,4.5 L5.5,9.5 L3.5,9.5" fill="none" stroke="#2a3f66" stroke-width="1.3"/>
   <path d="M7.5,1.5 L10.5,1.5 L8,5 L8,10" fill="none" stroke="#9b8f80" stroke-width="1.3"/>
 </g>
<g transform="translate(674,174)">
   <path d="M1,11 L7,5" stroke="#d7a93a" stroke-width="2.2" stroke-linecap="round"/>
   <path d="M4,2 Q7,0 10,2 L11,5 L8,6 L6,4 Z" fill="#c8d0da" stroke="#7d8896" stroke-width="0.8"/>
   <path d="M7,7.5 L15,7.5 L12,11 L12,15.5 L10,15.5 L10,11 Z" fill="#f2f5f8" stroke="#8f9aaa" stroke-width="0.8"/>
 </g>
<g transform="translate(674,354)">
   <path d="M1.5,14 L1.5,3.5 L8,3.5" fill="none" stroke="#f0b030" stroke-width="2"/>
   <path d="M7.5,1 L11,3.5 L7.5,6 Z" fill="#e09a20"/>
   <path d="M5,14 L13,7" stroke="#5c9ce8" stroke-width="1.5"/>
   <path d="M14,0.5 A3,3 0 0 0 14,6.5" fill="none" stroke="#f0b030" stroke-width="2"/>
 </g>
<g transform="translate(674,375)">
   <path d="M1.5,14 L1.5,3.5 L8,3.5 M4.5,14 L4.5,7 L8,7" fill="none" stroke="#f0b030" stroke-width="1.8"/>
   <path d="M7.5,1 L11,3.5 L7.5,6 Z M7.5,5 L10,7 L7.5,9 Z" fill="#e09a20"/>
   <path d="M7,14 L14,8" stroke="#5c9ce8" stroke-width="1.5"/>
   <path d="M14,0.5 A3,3 0 0 0 14,6.5" fill="none" stroke="#f0b030" stroke-width="2"/>
 </g>
<g transform="translate(674,397)">
   <path d="M1,1.5 L8,1.5" stroke="#7aa4e4" stroke-width="2.4"/>
   <path d="M6.5,1.5 L6.5,12" stroke="#6a96dc" stroke-width="2"/>
   <path d="M6.5,4.5 L9.5,7.5 L14,7.5 M6.5,8 L9.5,10.5 L14,10.5" fill="none" stroke="#6a96dc" stroke-width="1.5"/>
 </g>
<g transform="translate(676,423)">
   <path d="M2,0 L5.5,7.5 M9,0 L5.5,7.5" stroke="#8f949c" stroke-width="1.8"/>
   <circle cx="3" cy="10" r="2.4" fill="none" stroke="#3f6cc8" stroke-width="1.8"/>
   <circle cx="8" cy="10" r="2.4" fill="none" stroke="#3f6cc8" stroke-width="1.8"/>
 </g>
<g transform="translate(675,444)">
   <path d="M0.5,0.5 L5.5,0.5 L8,3 L8,9 L0.5,9 Z" fill="#e6eef8" stroke="#90a6c8" stroke-width="1"/>
   <path d="M5.5,4.5 L10.5,4.5 L13,7 L13,12.5 L5.5,12.5 Z" fill="#7aa0dc" stroke="#3f6cc0" stroke-width="1"/>
   <path d="M7.5,7.5 L11,7.5 M7.5,9.5 L11,9.5" stroke="#e6eef8" stroke-width="1"/>
 </g>
<g transform="translate(675,465)">
   <path d="M0.5,2 L9,2 L9,10 L0.5,10 Z" fill="#e4e4e4" stroke="#c4c4c4" stroke-width="1"/>
   <path d="M3,0.5 L6.5,0.5 L6.5,3 L3,3 Z" fill="#d8d8d8" stroke="#bdbdbd" stroke-width="0.8"/>
   <path d="M6,7 L13.5,7 L13.5,13 L6,13 Z" fill="#e8e8e8" stroke="#c0c0c0" stroke-width="1"/>
 </g>
<g font-family="Liberation Sans, sans-serif" font-size="10.8" stroke-width="0.3">
<text x="700.5" y="164" textLength="100" lengthAdjust="spacingAndGlyphs" fill="#141414" stroke="#141414">Find Similar Objects...</text>
<rect x="709.0" y="165.5" width="5.7" height="1.2" fill="#4a4a4a"/>
<text x="700.5" y="185" textLength="62.8" lengthAdjust="spacingAndGlyphs" fill="#141414" stroke="#141414">Build Query...</text>
<text x="700.5" y="206.5" textLength="23" lengthAdjust="spacingAndGlyphs" fill="#141414" stroke="#141414">Filter</text>
<rect x="700.5" y="208.0" width="6.3" height="1.2" fill="#4a4a4a"/>
<path d="M876,198.0 L880.5,202.0 L876,206.0 Z" fill="#000"/>
<text x="700.5" y="232.4" textLength="92.7" lengthAdjust="spacingAndGlyphs" fill="#141414" stroke="#141414">Component Locked</text>
<rect x="758.7" y="233.9" width="5.9" height="1.2" fill="#4a4a4a"/>
<text x="700.5" y="253.5" textLength="32.7" lengthAdjust="spacingAndGlyphs" fill="#141414" stroke="#141414">Unions</text>
<rect x="700.5" y="255.0" width="7.6" height="1.2" fill="#4a4a4a"/>
<path d="M876,245.0 L880.5,249.0 L876,253.0 Z" fill="#000"/>
<text x="700.5" y="274.9" textLength="39.6" lengthAdjust="spacingAndGlyphs" fill="#141414" stroke="#141414">Snippets</text>
<rect x="700.5" y="276.4" width="6.8" height="1.2" fill="#4a4a4a"/>
<path d="M876,266.4 L880.5,270.4 L876,274.4 Z" fill="#000"/>
<text x="700.5" y="296" textLength="94.7" lengthAdjust="spacingAndGlyphs" fill="#141414" stroke="#141414">Component Actions</text>
<rect x="700.5" y="297.5" width="7.9" height="1.2" fill="#4a4a4a"/>
<path d="M876,287.5 L880.5,291.5 L876,295.5 Z" fill="#000"/>
<text x="700.5" y="317.4" textLength="24.6" lengthAdjust="spacingAndGlyphs" fill="#141414" stroke="#141414">Align</text>
<rect x="700.5" y="318.9" width="7.4" height="1.2" fill="#4a4a4a"/>
<path d="M876,308.9 L880.5,312.9 L876,316.9 Z" fill="#000"/>
<text x="700.5" y="343.1" textLength="66.5" lengthAdjust="spacingAndGlyphs" fill="#141414" stroke="#141414">Room Actions</text>
<rect x="720.3" y="344.6" width="9.0" height="1.2" fill="#4a4a4a"/>
<path d="M876,334.6 L880.5,338.6 L876,342.6 Z" fill="#000"/>
<text x="700.5" y="364.4" textLength="88" lengthAdjust="spacingAndGlyphs" fill="#141414" stroke="#141414">Interactive Routing</text>
<rect x="771.5" y="365.9" width="4.5" height="1.2" fill="#4a4a4a"/>
<text x="851.5" y="364.4" textLength="9.5" lengthAdjust="spacingAndGlyphs" fill="#141414" stroke="#141414">W</text>
<text x="700.5" y="385.6" textLength="163" lengthAdjust="spacingAndGlyphs" fill="#141414" stroke="#141414">Interactive Differential Pair Routing</text>
<rect x="759.8" y="387.1" width="4.5" height="1.2" fill="#4a4a4a"/>
<text x="700.5" y="406.9" textLength="118" lengthAdjust="spacingAndGlyphs" fill="#141414" stroke="#141414">Interactive Multi-Routing</text>
<rect x="754.0" y="408.4" width="9.1" height="1.2" fill="#4a4a4a"/>
<text x="700.5" y="432.8" textLength="17" lengthAdjust="spacingAndGlyphs" fill="#141414" stroke="#141414">Cut</text>
<rect x="714.5" y="434.3" width="4.5" height="1.2" fill="#4a4a4a"/>
<text x="831.4" y="432.8" textLength="30" lengthAdjust="spacingAndGlyphs" fill="#141414" stroke="#141414">Ctrl+X</text>
<text x="700.5" y="454" textLength="24.8" lengthAdjust="spacingAndGlyphs" fill="#141414" stroke="#141414">Copy</text>
<rect x="700.5" y="455.5" width="7.7" height="1.2" fill="#4a4a4a"/>
<text x="831.4" y="454" textLength="30" lengthAdjust="spacingAndGlyphs" fill="#141414" stroke="#141414">Ctrl+C</text>
<text x="700.5" y="475.3" textLength="24.8" lengthAdjust="spacingAndGlyphs" fill="#a3a3a3" stroke="#a3a3a3">Paste</text>
<rect x="700.5" y="476.8" width="6.5" height="1.2" fill="#b8b8b8"/>
<text x="831.4" y="475.3" textLength="30" lengthAdjust="spacingAndGlyphs" fill="#a3a3a3" stroke="#a3a3a3">Ctrl+V</text>
<text x="700.5" y="496.6" textLength="23.6" lengthAdjust="spacingAndGlyphs" fill="#141414" stroke="#141414">Clear</text>
<text x="846.8" y="496.6" textLength="14.6" lengthAdjust="spacingAndGlyphs" fill="#141414" stroke="#141414">Del</text>
<text x="700.5" y="522" textLength="114.7" lengthAdjust="spacingAndGlyphs" fill="#141414" stroke="#141414">Applicable Unary Rules...</text>
<rect x="750.5" y="523.5" width="7.4" height="1.2" fill="#4a4a4a"/>
<text x="700.5" y="543.2" textLength="116.8" lengthAdjust="spacingAndGlyphs" fill="#141414" stroke="#141414">Applicable Binary Rules...</text>
<rect x="750.6" y="544.7" width="6.8" height="1.2" fill="#4a4a4a"/>
<text x="700.5" y="568.6" textLength="44.7" lengthAdjust="spacingAndGlyphs" fill="#141414" stroke="#141414">Snap Grid</text>
<rect x="726.4" y="570.1" width="7.7" height="1.2" fill="#4a4a4a"/>
<path d="M876,560.1 L880.5,564.1 L876,568.1 Z" fill="#000"/>
<text x="700.5" y="590" textLength="22.2" lengthAdjust="spacingAndGlyphs" fill="#141414" stroke="#141414">View</text>
<rect x="700.5" y="591.5" width="6.9" height="1.2" fill="#4a4a4a"/>
<path d="M876,581.5 L880.5,585.5 L876,589.5 Z" fill="#000"/>
<text x="700.5" y="611.4" textLength="31.4" lengthAdjust="spacingAndGlyphs" fill="#141414" stroke="#141414">Design</text>
<rect x="700.5" y="612.9" width="7.3" height="1.2" fill="#4a4a4a"/>
<path d="M876,602.9 L880.5,606.9 L876,610.9 Z" fill="#000"/>
<text x="700.5" y="637.3" textLength="36.9" lengthAdjust="spacingAndGlyphs" fill="#141414" stroke="#141414">Options</text>
<rect x="700.5" y="638.8" width="8.3" height="1.2" fill="#4a4a4a"/>
<path d="M876,628.8 L880.5,632.8 L876,636.8 Z" fill="#000"/>
<text x="700.5" y="658.6" textLength="54.9" lengthAdjust="spacingAndGlyphs" fill="#141414" stroke="#141414">Properties...</text>
<rect x="700.5" y="660.1" width="6.8" height="1.2" fill="#4a4a4a"/>
</g>
</svg>
<svg width="1000" height="43" viewBox="0 762 1000 43" style="position:absolute;left:0;top:762px">
<rect x="0" y="762" width="1000" height="43" fill="#ececec"/>
<rect x="0" y="762" width="1000" height="2" fill="#fafafa"/>
<rect x="0" y="777" width="994" height="1" fill="#a8a8a8"/>
<rect x="0" y="778" width="994" height="16" fill="#f4f4f4"/>
<rect x="0" y="794" width="994" height="1.5" fill="#6e6e6e"/>
<path d="M32,778 L121,778 L117,794 L37,794 Z" fill="#ffffff"/>
<path d="M32,778 L37,794 M121,778 L117,794" stroke="#6a6a6a" stroke-width="1" fill="none"/>
<rect x="39" y="781.5" width="8" height="8" fill="#808000" stroke="#909090" stroke-width="1"/>
<text x="52" y="790" textLength="62" lengthAdjust="spacingAndGlyphs" font-family="Liberation Sans, sans-serif" font-size="11" font-weight="normal" fill="#000">Mechanical 28</text>
<path d="M121,778 L206,778 L202,794 L122.5,794 Z" fill="#ffffff"/>
<path d="M121,778 L122.5,794 M206,778 L202,794" stroke="#6a6a6a" stroke-width="1" fill="none"/>
<rect x="125" y="781.5" width="8" height="8" fill="#800080" stroke="#909090" stroke-width="1"/>
<text x="137" y="790" textLength="62" lengthAdjust="spacingAndGlyphs" font-family="Liberation Sans, sans-serif" font-size="11" font-weight="normal" fill="#000">Mechanical 30</text>
<path d="M206,778 L280,778 L276,794 L207.5,794 Z" fill="#ffffff"/>
<path d="M206,778 L207.5,794 M280,778 L276,794" stroke="#6a6a6a" stroke-width="1" fill="none"/>
<rect x="209" y="781.5" width="8" height="8" fill="#ffff00" stroke="#909090" stroke-width="1"/>
<text x="222" y="790" textLength="51" lengthAdjust="spacingAndGlyphs" font-family="Liberation Sans, sans-serif" font-size="11" font-weight="normal" fill="#000">Top Overlay</text>
<path d="M280,778 L384,778 L380,794 L281.5,794 Z" fill="#ececec"/>
<path d="M280,778 L281.5,794 M384,778 L380,794" stroke="#6a6a6a" stroke-width="1" fill="none"/>
<rect x="284" y="781.5" width="8" height="8" fill="#808000" stroke="#909090" stroke-width="1"/>
<text x="297" y="790" textLength="76" lengthAdjust="spacingAndGlyphs" font-family="Liberation Sans, sans-serif" font-size="11" font-weight="bold" fill="#000">Bottom Overlay</text>
<path d="M384,778 L450,778 L446,794 L385.5,794 Z" fill="#ffffff"/>
<path d="M384,778 L385.5,794 M450,778 L446,794" stroke="#6a6a6a" stroke-width="1" fill="none"/>
<rect x="387" y="781.5" width="8" height="8" fill="#808080" stroke="#909090" stroke-width="1"/>
<text x="400" y="790" textLength="42.5" lengthAdjust="spacingAndGlyphs" font-family="Liberation Sans, sans-serif" font-size="11" font-weight="normal" fill="#000">Top Paste</text>
<path d="M450,778 L529,778 L525,794 L451.5,794 Z" fill="#ffffff"/>
<path d="M450,778 L451.5,794 M529,778 L525,794" stroke="#6a6a6a" stroke-width="1" fill="none"/>
<rect x="453" y="781.5" width="8" height="8" fill="#800000" stroke="#909090" stroke-width="1"/>
<text x="466" y="790" textLength="55.5" lengthAdjust="spacingAndGlyphs" font-family="Liberation Sans, sans-serif" font-size="11" font-weight="normal" fill="#000">Bottom Paste</text>
<path d="M529,778 L598,778 L594,794 L530.5,794 Z" fill="#ffffff"/>
<path d="M529,778 L530.5,794 M598,778 L594,794" stroke="#6a6a6a" stroke-width="1" fill="none"/>
<rect x="532" y="781.5" width="8" height="8" fill="#800080" stroke="#909090" stroke-width="1"/>
<text x="545" y="790" textLength="45" lengthAdjust="spacingAndGlyphs" font-family="Liberation Sans, sans-serif" font-size="11" font-weight="normal" fill="#000">Top Solder</text>
<path d="M598,778 L680,778 L676,794 L599.5,794 Z" fill="#ffffff"/>
<path d="M598,778 L599.5,794 M680,778 L676,794" stroke="#6a6a6a" stroke-width="1" fill="none"/>
<rect x="600" y="781.5" width="8" height="8" fill="#ff00ff" stroke="#909090" stroke-width="1"/>
<text x="614" y="790" textLength="58.5" lengthAdjust="spacingAndGlyphs" font-family="Liberation Sans, sans-serif" font-size="11" font-weight="normal" fill="#000">Bottom Solder</text>
<path d="M680,778 L745,778 L741,794 L681.5,794 Z" fill="#ffffff"/>
<path d="M680,778 L681.5,794 M745,778 L741,794" stroke="#6a6a6a" stroke-width="1" fill="none"/>
<rect x="683" y="781.5" width="8" height="8" fill="#800000" stroke="#909090" stroke-width="1"/>
<text x="696" y="790" textLength="41.5" lengthAdjust="spacingAndGlyphs" font-family="Liberation Sans, sans-serif" font-size="11" font-weight="normal" fill="#000">Drill Guide</text>
<path d="M745,778 L834,778 L830,794 L746.5,794 Z" fill="#ffffff"/>
<path d="M745,778 L746.5,794 M834,778 L830,794" stroke="#6a6a6a" stroke-width="1" fill="none"/>
<rect x="748" y="781.5" width="8" height="8" fill="#ff00ff" stroke="#909090" stroke-width="1"/>
<text x="761" y="790" textLength="65" lengthAdjust="spacingAndGlyphs" font-family="Liberation Sans, sans-serif" font-size="11" font-weight="normal" fill="#000">Keep-Out Layer</text>
<path d="M834,778 L910,778 L906,794 L835.5,794 Z" fill="#ffffff"/>
<path d="M834,778 L835.5,794 M910,778 L906,794" stroke="#6a6a6a" stroke-width="1" fill="none"/>
<rect x="837" y="781.5" width="8" height="8" fill="#ff0020" stroke="#909090" stroke-width="1"/>
<text x="849" y="790" textLength="53" lengthAdjust="spacingAndGlyphs" font-family="Liberation Sans, sans-serif" font-size="11" font-weight="normal" fill="#000">Drill Drawing</text>
<path d="M910,778 L985,778 L981,794 L911.5,794 Z" fill="#ffffff"/>
<path d="M910,778 L911.5,794 M985,778 L981,794" stroke="#6a6a6a" stroke-width="1" fill="none"/>
<rect x="912" y="781.5" width="8" height="8" fill="#c0c0c0" stroke="#909090" stroke-width="1"/>
<text x="925" y="790" textLength="46" lengthAdjust="spacingAndGlyphs" font-family="Liberation Sans, sans-serif" font-size="11" font-weight="normal" fill="#000">Multi-Layer</text>
<rect x="0" y="780" width="9" height="12" fill="#808000"/>
<rect x="0" y="791" width="9" height="1" fill="#504a10"/>
<rect x="10.5" y="780.5" width="16.5" height="11" fill="#fbfbfb" stroke="#9a9a9a" stroke-width="1" rx="1"/>
<text x="13" y="790" font-family="Liberation Sans, sans-serif" font-size="10" fill="#6a6a6a" textLength="11" lengthAdjust="spacingAndGlyphs">LS</text>
<rect x="972.5" y="780.5" width="19" height="11" fill="#d8d8d8" stroke="#111" stroke-width="1.2"/>
<rect x="981" y="780.5" width="1.2" height="11" fill="#111"/>
<path d="M974.5,786 L978.5,782.5 L978.5,789.5 Z M977,785 L980,785 L980,787 L977,787 Z" fill="#000"/>
<path d="M989.5,786 L985.5,782.5 L985.5,789.5 Z M983,785 L986,785 L986,787 L983,787 Z" fill="#9a9a9a"/>
<path d="M997,784 L1000,782 L1000,793 L997,791 Z" fill="#e8e020"/>
<rect x="121" y="799" width="1" height="6" fill="#b0b0b0"/>
<rect x="450" y="799" width="1" height="6" fill="#b0b0b0"/>
</svg>
</body></html>
